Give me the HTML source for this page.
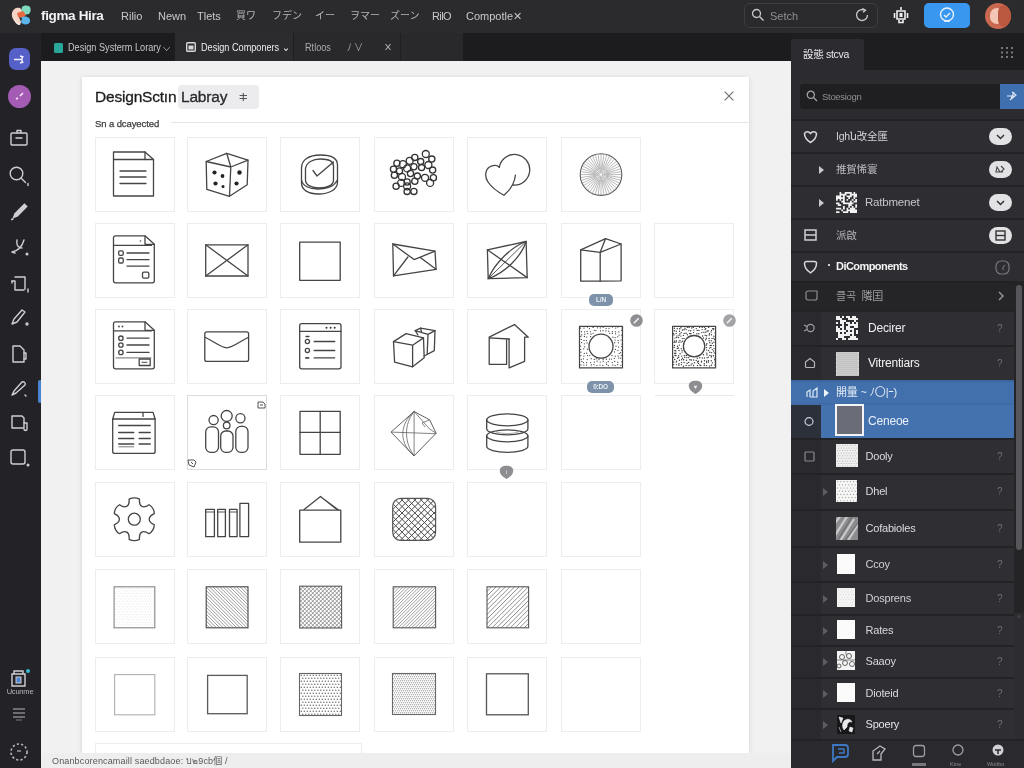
<!DOCTYPE html>
<html lang="en">
<head>
<meta charset="utf-8">
<title>Design System Library</title>
<style>
*{box-sizing:border-box;margin:0;padding:0}
html,body{width:1024px;height:768px;overflow:hidden;background:#f0f0f1;}
body{filter:blur(0.55px);font-family:"Liberation Sans","Noto Sans CJK JP",sans-serif;}
.abs{position:absolute}
#top{position:absolute;left:0;top:0;width:1024px;height:33px;background:#2b2b2e;color:#d4d4d8;}
#top span.m{position:absolute;top:9px;font-size:11px;line-height:14px;color:#c9c9cd;white-space:nowrap}
#top span.j{font-size:10px;color:#b4b4b9}
#tabs{position:absolute;left:0;top:33px;width:791px;height:28px;background:#1c1c1f}
#tabs .t{position:absolute;top:0;height:28px;font-size:10.500px;line-height:28px;color:#c8c8cc;white-space:nowrap;transform:scaleX(.87);transform-origin:0 50%}
#side{position:absolute;left:0;top:33px;width:41px;height:735px;background:#232327}
#canvas{position:absolute;left:41px;top:61px;width:750px;height:707px;background:#f1f1f2}
#modal{position:absolute;left:82px;top:77px;width:667px;height:676px;background:#fff;box-shadow:0 1px 5px rgba(0,0,0,.13);overflow:hidden}
.card{position:absolute;width:80px;height:75px;border:1px solid #ededf0;background:#fff}
.card svg{position:absolute;left:-1px;top:-1px}
.card.sel{border-color:#dcdce0}
.bdg{position:absolute;border-radius:5px;background:#7e93aa;color:#e8eef4;font-size:6.500px;line-height:12px;text-align:center;font-weight:bold;letter-spacing:-0.2px}
#rp{position:absolute;left:791px;top:33px;width:233px;height:735px;background:#2c2c30;color:#d8d8dc;font-size:12px;overflow:hidden}
.row{position:absolute;left:0;width:223px;background:#2e2e32;border-top:2px solid #232326}
.row .tx{position:absolute;white-space:nowrap;color:#d6d6da;font-size:12px;line-height:14px}
.pill{position:absolute;left:198px;width:23px;height:17px;border-radius:9px;background:#e2e2e5}
.th{position:absolute;background:#f4f4f4}
.q{position:absolute;left:206px;font-size:10px;color:#6d6d73;line-height:12px}
.ar{position:absolute;left:31px;width:0;height:0;border-left:5px solid #66666b;border-top:4px solid transparent;border-bottom:4px solid transparent}
.lc{position:absolute;left:0;top:0;width:30px;height:100%;background:#2a2a2e}
</style>
</head>
<body>
<div id="top">
<svg class="abs" style="left:10px;top:4px" width="24" height="24" viewBox="0 0 24 24"><path d="M2 9c1-4 4-6 8-5l3 3-2 5 1 4-2 5-3-1C4 17 1 13 2 9z" fill="#f6d3c6"/><path d="M12 3c2-2 6-2 8 0 1 2 1 5-1 7l-5 1-3-3z" fill="#7fd9be"/><path d="M7 9l6-2 3 4-3 3-5-1z" fill="#e8683f"/><path d="M11 14c2-2 6-2 8 0 2 2 1 5-1 6-3 1-6 0-7-2z" fill="#5bb4ea"/><path d="M9 13l3 1-1 4z" fill="#2b2b2e"/><path d="M4 13c1 3 3 6 6 7l-1 1c-3-1-5-4-5-8z" fill="#fbeee8"/></svg>
<span class="m" style="left:41px;top:7px;font-size:13.500px;line-height:18px;color:#f3f3f5;font-weight:bold;letter-spacing:-0.35px">figma Hira</span>
<span class="m" style="left:121px">Rilio</span>
<span class="m" style="left:158px">Newn</span>
<span class="m" style="left:197px">Tlets</span>
<span class="m j" style="left:236px">買ワ</span>
<span class="m j" style="left:272px">フデン</span>
<span class="m j" style="left:315px">イー</span>
<span class="m j" style="left:350px">ヲマー</span>
<span class="m j" style="left:390px">ズーン</span>
<span class="m" style="left:432px;letter-spacing:-0.6px">RilO</span>
<span class="m" style="left:466px">Compotle✕</span>
<div class="abs" style="left:744px;top:3px;width:134px;height:25px;border:1px solid #3d3d41;border-radius:6px;background:#2a2a2d"></div>
<svg class="abs" style="left:751px;top:8px" width="14" height="14" viewBox="0 0 14 14"><circle cx="5.500" cy="5.500" r="4" fill="none" stroke="#c8c8cc" stroke-width="1.3"/><path d="M8.500 8.500l4 4" stroke="#c8c8cc" stroke-width="1.4"/></svg>
<span class="m" style="left:770px;color:#8f8f95">Setch</span>
<svg class="abs" style="left:854px;top:7px" width="16" height="16" viewBox="0 0 16 16"><path d="M13.500 8a5.500 5.500 0 1 1-2.500-4.600" fill="none" stroke="#c8c8cc" stroke-width="1.3"/><path d="M8.500 1.500l3 1.800-2.500 2" fill="none" stroke="#c8c8cc" stroke-width="1.3"/></svg>
<svg class="abs" style="left:893px;top:6px" width="16" height="18" viewBox="0 0 16 18"><path d="M8 1v3M4 5h8v8H4zM1.500 7v5M14.500 7v5M6 14v2.500h4V14" fill="none" stroke="#f0f0f2" stroke-width="1.600"/><rect x="6.500" y="7" width="3" height="4" fill="#f0f0f2"/></svg>
<div class="abs" style="left:924px;top:3px;width:46px;height:25px;border-radius:5px;background:#3a97ef"></div>
<svg class="abs" style="left:938px;top:6px" width="18" height="18" viewBox="0 0 18 18"><circle cx="9" cy="8.500" r="6.500" fill="none" stroke="#e9f3ff" stroke-width="1.400"/><path d="M6 9l2 2 4-4M6 15h6" fill="none" stroke="#e9f3ff" stroke-width="1.300"/></svg>
<div class="abs" style="left:985px;top:3px;width:26px;height:26px;border-radius:13px;background:#c9694f;overflow:hidden"><div class="abs" style="left:5px;top:5px;width:14px;height:16px;border-radius:8px;background:#f3c6b5"></div><div class="abs" style="left:13px;top:2px;width:14px;height:22px;border-radius:8px;background:#b9573f"></div></div>
</div>

<div id="tabs">
<div class="abs" style="left:175px;top:0;width:118px;height:28px;background:#2c2c2f"></div>
<div class="abs" style="left:293px;top:0;width:170px;height:28px;background:#29292c;border-left:1px solid #1d1d20"></div>
<div class="abs" style="left:400px;top:0;width:1px;height:28px;background:#1f1f22"></div>
<div class="abs" style="left:54px;top:10px;width:9px;height:10px;border-radius:1.500px;background:#2aa79c"></div>
<div class="t" style="left:68px">Design Systerm Lorary ⌵</div>
<svg class="abs" style="left:186px;top:9px" width="10" height="10" viewBox="0 0 10 10"><rect x=".7" y=".7" width="8.600" height="8.600" rx="1" fill="none" stroke="#d8d8dc" stroke-width="1.400"/><rect x="2.500" y="3.500" width="5" height="4" fill="#d8d8dc"/></svg>
<div class="t" style="left:201px;color:#ececf0">Design Componers ⌄</div>
<div class="t" style="left:305px;color:#a9a9ae">Rtloos</div>
<div class="t" style="left:347px;color:#a9a9ae">ﾉ ∨</div>
<div class="t" style="left:384px;color:#a9a9ae">✕</div>
</div>

<div id="side">
<div class="abs" style="left:9px;top:15px;width:21px;height:22px;border-radius:7px;background:#5560c8"></div>
<svg class="abs" style="left:13px;top:21px" width="13" height="11" viewBox="0 0 13 11"><path d="M1 5.500h8M7 2l3.500 1M7 9l3.500-1M9 2v7" fill="none" stroke="#f0f0ff" stroke-width="1.400"/></svg>
<div class="abs" style="left:8px;top:52px;width:23px;height:23px;border-radius:12px;background:#a45bb4"></div>
<svg class="abs" style="left:14px;top:58px" width="11" height="11" viewBox="0 0 11 11"><path d="M2 8l2-1M6 5l3-3" stroke="#f6e8fa" stroke-width="1.600" fill="none"/></svg>
<svg class="abs" style="left:9.0px;top:95.0px" width="20" height="20" viewBox="0 0 20 20"><g fill="none" stroke="#cfcfd3" stroke-width="1.400" stroke-linecap="round" stroke-linejoin="round"><rect x="2" y="5" width="16" height="12" rx="1"/><path d="M8 5V2.500h4V5M7 10h6"/></g></svg>
<svg class="abs" style="left:9.0px;top:132.0px" width="22" height="22" viewBox="0 0 22 22"><g fill="none" stroke="#cfcfd3" stroke-width="1.400" stroke-linecap="round" stroke-linejoin="round"><circle cx="7.500" cy="8.500" r="6.300"/><path d="M12 13l4.500 4.500M19 18.500v2"/></g></svg>
<svg class="abs" style="left:9px;top:167px" width="22" height="22" viewBox="0 0 20 20"><path d="M3 17l2-5 9-9 3 3-9 9z" fill="#cfcfd3"/><path d="M2 18l2-1" stroke="#cfcfd3" stroke-width="1.400"/></svg>
<svg class="abs" style="left:9.0px;top:203.0px" width="22" height="22" viewBox="0 0 22 22"><g fill="none" stroke="#cfcfd3" stroke-width="1.400" stroke-linecap="round" stroke-linejoin="round"><path d="M3 16c5-1 10-5 12-12M8 4c-1 5 1 8 5 8M3 16l3 1"/><circle cx="18" cy="18" r="0.800"/></g></svg>
<svg class="abs" style="left:9.0px;top:241.0px" width="22" height="22" viewBox="0 0 22 22"><g fill="none" stroke="#cfcfd3" stroke-width="1.400" stroke-linecap="round" stroke-linejoin="round"><path d="M6 3h10v12M3 7h3v9h9"/><path d="M3 7v4M6 3v0" stroke-dasharray="2 2"/><path d="M19 15v3"/></g></svg>
<svg class="abs" style="left:9.0px;top:274.0px" width="22" height="22" viewBox="0 0 22 22"><g fill="none" stroke="#cfcfd3" stroke-width="1.400" stroke-linecap="round" stroke-linejoin="round"><path d="M3 17l2-5 8-9 3 2-8 10z"/><circle cx="18" cy="17" r="1" /></g></svg>
<svg class="abs" style="left:9.0px;top:311.0px" width="20" height="20" viewBox="0 0 20 20"><g fill="none" stroke="#cfcfd3" stroke-width="1.400" stroke-linecap="round" stroke-linejoin="round"><path d="M4 2h7l4 4v12H4z"/><path d="M15 9h2v6h-2"/></g></svg>
<svg class="abs" style="left:9.0px;top:345.0px" width="22" height="22" viewBox="0 0 22 22"><g fill="none" stroke="#cfcfd3" stroke-width="1.400" stroke-linecap="round" stroke-linejoin="round"><path d="M3 17l2-4 8-9c2-1 4 1 3 3l-9 8z"/><path d="M16 17l1 1"/></g></svg>
<svg class="abs" style="left:9.0px;top:380.0px" width="22" height="22" viewBox="0 0 22 22"><g fill="none" stroke="#cfcfd3" stroke-width="1.400" stroke-linecap="round" stroke-linejoin="round"><path d="M3 3h10l2 2v10H3z"/><path d="M15 10h3v6c0 2-3 2-3 0"/></g></svg>
<svg class="abs" style="left:9.0px;top:415.0px" width="22" height="22" viewBox="0 0 22 22"><g fill="none" stroke="#cfcfd3" stroke-width="1.400" stroke-linecap="round" stroke-linejoin="round"><rect x="2" y="2" width="14" height="14" rx="2"/><circle cx="19" cy="17" r="0.800"/></g></svg>
<div class="abs" style="left:38px;top:347px;width:4px;height:23px;border-radius:2px;background:#4a83cf"></div>
<svg class="abs" style="left:9px;top:635px" width="22" height="20" viewBox="0 0 22 20"><path d="M3 6h13v12H3zM5 6V3h9v3" fill="none" stroke="#d0d0d4" stroke-width="1.400"/><rect x="7" y="9" width="5" height="6" fill="#4a83cf" stroke="#d0d0d4"/><circle cx="19" cy="3" r="2" fill="#35b8d0"/></svg>
<div class="abs" style="left:3px;top:654px;width:34px;text-align:center;font-size:7.500px;line-height:10px;color:#b4b4b9;letter-spacing:-0.2px">Ucunme</div>
<svg class="abs" style="left:12px;top:674px" width="14" height="14" viewBox="0 0 14 14"><path d="M1 2h12M1 6h12M1 10h12" stroke="#b8b8bd" stroke-width="1.200"/><path d="M4 13h6" stroke="#77777c" stroke-width="1"/></svg>
<svg class="abs" style="left:9px;top:709px" width="20" height="20" viewBox="0 0 20 20"><circle cx="10" cy="10" r="8" fill="none" stroke="#b8b8bd" stroke-width="1.600" stroke-dasharray="2.200 2.200"/><path d="M8 9h4" stroke="#b8b8bd" stroke-width="1.200"/></svg>
</div>

<div id="canvas"></div>
<div id="modal"></div>
<div id="grid" class="abs" style="left:0;top:0;width:749px;height:753px;overflow:hidden">
<div class="card" style="left:95px;top:137px"><svg width="81" height="75" viewBox="0 0 81 75"><g fill="none" stroke="#454547" stroke-width="1.300" stroke-linejoin="round" stroke-linecap="round" ><path d="M18.500 15h31.500l8.500 7.500v36.500h-40z"/><path d="M50 15v7.500h8.500"/><path d="M18.500 22.500h31.500"/><path d="M25 34h26M25 40h26M25 46.500h26"/></g></svg></div>
<div class="card" style="left:187px;top:137px"><svg width="81" height="75" viewBox="0 0 81 75"><g fill="none" stroke="#454547" stroke-width="1.300" stroke-linejoin="round" stroke-linecap="round" ><path d="M39.700 16.300L61 23.200 60.200 47.800 42.500 59.300 19.800 52.400 19.200 24.500z"/><path d="M19.200 24.500L43.800 30 61 23.200M43.800 30L42.500 59.300M39.700 16.300L43.800 30"/></g><g fill="#222"><circle cx="27.500" cy="35.500" r="2.100"/><circle cx="35.500" cy="39" r="1.900"/><circle cx="28.500" cy="46.500" r="2.100"/><circle cx="36" cy="49.500" r="1.500"/><circle cx="52.500" cy="35.500" r="2.200"/><circle cx="49.500" cy="46.500" r="2.100"/></g></svg></div>
<div class="card" style="left:280px;top:137px"><svg width="81" height="75" viewBox="0 0 81 75"><g fill="none" stroke="#454547" stroke-width="1.300" stroke-linejoin="round" stroke-linecap="round" ><path d="M21.500 31c0-8 7-13 19-13 10 0 17 3 17 10v17c0 8-9 12-19 12s-17-4-17-11z"/><path d="M25.500 31.500c1-6 7-9.500 15-9.500 8 0 13 2 13 7v14c0 5-6 8-14 8s-14-3-14-8z"/><path d="M21.500 43c1 6 8 9 16 9 9 0 17-3 20-9"/><path d="M33 33.500l4 5.500 16.500-14"/></g></svg></div>
<div class="card" style="left:374px;top:137px"><svg width="81" height="75" viewBox="0 0 81 75"><g fill="none" stroke="#333" stroke-width="1.300" ><circle cx="51.8" cy="17" r="3.5"/><circle cx="57.8" cy="22.1" r="3.1"/><circle cx="46.7" cy="24.6" r="3.1"/><circle cx="35.7" cy="23.8" r="3.5"/><circle cx="40.8" cy="20.4" r="3.1"/><circle cx="22.9" cy="26.3" r="3.1"/><circle cx="28.9" cy="27.2" r="3.5"/><circle cx="19.5" cy="32.3" r="3.1"/><circle cx="25.5" cy="34" r="3.1"/><circle cx="33.1" cy="31.4" r="3.5"/><circle cx="39.9" cy="29.7" r="3.1"/><circle cx="47.6" cy="30.6" r="3.1"/><circle cx="54.4" cy="28" r="3.5"/><circle cx="58.6" cy="33.1" r="3.1"/><circle cx="20.4" cy="38.2" r="3.1"/><circle cx="28" cy="39.9" r="3.5"/><circle cx="36.5" cy="36.5" r="3.1"/><circle cx="43.3" cy="39.1" r="3.1"/><circle cx="51" cy="40.8" r="3.5"/><circle cx="59.4" cy="40.8" r="3.1"/><circle cx="22.1" cy="49.3" r="3.1"/><circle cx="27.2" cy="45.9" r="3.5"/><circle cx="33.1" cy="45" r="3.1"/><circle cx="40.8" cy="44.2" r="3.1"/><circle cx="56.1" cy="45.9" r="3.5"/><circle cx="33.1" cy="54.4" r="3.1"/><circle cx="39.9" cy="54.4" r="3.1"/><circle cx="33.1" cy="49.3" r="3.5"/></g></svg></div>
<div class="card" style="left:467px;top:137px"><svg width="81" height="75" viewBox="0 0 81 75"><g fill="none" stroke="#454547" stroke-width="1.300" stroke-linejoin="round" stroke-linecap="round" ><path d="M32.3 30.4A15.3 15.3 0 1 1 46.0 48.0"/><path d="M32.3 30.4C31 28 26 27.500 22.500 30C18 33 17.500 40 21 45C25 51 31 55 37 58.300C42 54 47.500 47 48.400 38.200"/></g></svg></div>
<div class="card" style="left:561px;top:137px"><svg width="81" height="75" viewBox="0 0 81 75"><g fill="none" stroke="#5a5a5a" ><circle cx="40" cy="37.6" r="20.8" stroke-width="1.100"/><path d="M41.2 37.6L60.8 37.6M45.4 38.4L60.6 40.6M42.9 38.4L60.0 43.5M45.0 39.9L58.9 46.2M41.0 38.2L57.5 48.8M44.2 41.2L55.7 51.2M42.0 39.9L53.6 53.3M43.0 42.2L51.2 55.1M40.5 38.7L48.6 56.5M41.5 42.9L45.9 57.6M40.4 40.6L43.0 58.2M40.0 43.1L40.0 58.4M39.8 38.8L37.0 58.2M38.5 42.9L34.1 57.6M38.8 40.3L31.4 56.5M37.0 42.2L28.8 55.1M39.2 38.5L26.4 53.3M35.8 41.2L24.3 51.2M37.5 39.2L22.5 48.8M35.0 39.9L21.1 46.2M38.8 37.9L20.0 43.5M34.6 38.4L19.4 40.6M37.0 37.6L19.2 37.6M34.6 36.8L19.4 34.6M38.8 37.3L20.0 31.7M35.0 35.3L21.1 29.0M37.5 36.0L22.5 26.4M35.8 34.0L24.3 24.0M39.2 36.7L26.4 21.9M37.0 33.0L28.8 20.1M38.8 34.9L31.4 18.7M38.5 32.3L34.1 17.6M39.8 36.4L37.0 17.0M40.0 32.1L40.0 16.8M40.4 34.6L43.0 17.0M41.5 32.3L45.9 17.6M40.5 36.5L48.6 18.7M43.0 33.0L51.2 20.1M42.0 35.3L53.6 21.9M44.2 34.0L55.7 24.0M41.0 37.0L57.5 26.4M45.0 35.3L58.9 29.0M42.9 36.8L60.0 31.7M45.4 36.8L60.6 34.6" stroke-width="0.550" stroke="#808080"/></g></svg></div>
<div class="card" style="left:95px;top:223px"><svg width="81" height="75" viewBox="0 0 81 75"><g fill="none" stroke="#454547" stroke-width="1.300" stroke-linejoin="round" stroke-linecap="round" ><path d="M20.500 12.800h29.500l9.300 8.500v36.500a2 2 0 0 1-2 2H20.500a2 2 0 0 1-2-2V14.800a2 2 0 0 1 2-2z"/><path d="M50 12.800v8.500h9.300"/><path d="M18.500 22.300h38"/><path d="M32 30h22M32 36.600h22M32 43.100h22"/><rect x="23.700" y="27.800" width="4.500" height="4.500" rx="1.200"/><rect x="23.700" y="35" width="4.500" height="5" rx="1.200"/><rect x="47.500" y="49.100" width="6.300" height="6.100" rx="1.400"/></g><circle cx="45.500" cy="18" r="0.800" fill="#444"/></svg></div>
<div class="card" style="left:187px;top:223px"><svg width="81" height="75" viewBox="0 0 81 75"><g fill="none" stroke="#454547" stroke-width="1.300" stroke-linejoin="round" stroke-linecap="round" ><rect x="18.700" y="21.800" width="42.300" height="31.200"/><path d="M18.700 21.800L61 53M61 21.800L18.700 53"/></g></svg></div>
<div class="card" style="left:280px;top:223px"><svg width="81" height="75" viewBox="0 0 81 75"><g fill="none" stroke="#454547" stroke-width="1.300" stroke-linejoin="round" stroke-linecap="round" ><rect x="19.700" y="19.100" width="40.500" height="38.200"/></g></svg></div>
<div class="card" style="left:374px;top:223px"><svg width="81" height="75" viewBox="0 0 81 75"><g fill="none" stroke="#454547" stroke-width="1.300" stroke-linejoin="round" stroke-linecap="round" ><path d="M18.800 21L61 28.200 62.100 46.300 19.500 52.800z"/><path d="M18.800 21L40.100 36.600 61 28.200M19.500 52.800L33.900 34M62.100 46.300L46.600 34.700"/></g></svg></div>
<div class="card" style="left:467px;top:223px"><svg width="81" height="75" viewBox="0 0 81 75"><g fill="none" stroke="#454547" stroke-width="1.300" stroke-linejoin="round" stroke-linecap="round" ><path d="M20.400 26.800L59.100 18.500 60.200 54.600 21.200 55.700z"/><path d="M20.400 26.800L60.200 54.600"/><path d="M21.200 55.700C28 40 44 24 59.100 18.500 54 34 38 50 21.200 55.700z"/><path d="M21.200 55.700L59.100 18.500" stroke-width="0.900"/></g></svg></div>
<div class="card" style="left:561px;top:223px"><svg width="81" height="75" viewBox="0 0 81 75"><g fill="none" stroke="#454547" stroke-width="1.300" stroke-linejoin="round" stroke-linecap="round" ><path d="M19.700 26.800v31.400h19.500l20.900-.4V21L44.600 15.600z"/><path d="M19.700 26.800L39.200 29.300 60.100 21M39.200 29.300v28.900M39.200 29.300L44.600 15.600"/></g></svg></div>
<div class="card" style="left:654px;top:223px"><svg width="81" height="75" viewBox="0 0 81 75"></svg></div>
<div class="card" style="left:95px;top:309px"><svg width="81" height="75" viewBox="0 0 81 75"><g fill="none" stroke="#454547" stroke-width="1.300" stroke-linejoin="round" stroke-linecap="round" ><path d="M20.500 12.800h29.500l9.300 8.500v36.500a2 2 0 0 1-2 2H20.500a2 2 0 0 1-2-2V14.800a2 2 0 0 1 2-2z"/><path d="M50 12.800v8.500h9.300"/><path d="M18.500 21.800h38"/><path d="M32 29.200h22M32 36h22M32 43.400h22"/><circle cx="25.900" cy="29.200" r="2.200"/><circle cx="25.900" cy="36" r="2.200"/><circle cx="25.900" cy="43.400" r="2.200"/><path d="M21 48.900h35" stroke-width="0.800"/><rect x="44.200" y="50" width="11" height="6.500"/><path d="M47 53.300h5" stroke-width="1"/></g><g fill="#444"><circle cx="24" cy="17.500" r="0.900"/><circle cx="27.500" cy="17.500" r="0.900"/></g></svg></div>
<div class="card" style="left:187px;top:309px"><svg width="81" height="75" viewBox="0 0 81 75"><g fill="none" stroke="#454547" stroke-width="1.300" stroke-linejoin="round" stroke-linecap="round" ><rect x="17.800" y="22.900" width="43.800" height="29.500" rx="2"/><path d="M18.500 28.500C28 33 34 38.800 39.700 38.800S52 33 61 28.500"/></g></svg></div>
<div class="card" style="left:280px;top:309px"><svg width="81" height="75" viewBox="0 0 81 75"><g fill="none" stroke="#454547" stroke-width="1.300" stroke-linejoin="round" stroke-linecap="round" ><rect x="19.700" y="14.700" width="41.300" height="45.100" rx="2"/><path d="M19.700 22.300h41.300"/><path d="M34.200 32.500h20.500M34.200 41.500h20.500M34.200 48.900h20.500"/><circle cx="27.400" cy="32.500" r="2.100"/><circle cx="27.400" cy="41.500" r="2.100"/><path d="M26 48.900h2.500" stroke-width="1.800"/><path d="M26 27.500h3" /></g><g fill="#333"><circle cx="46.500" cy="18.700" r="1"/><circle cx="50.600" cy="18.700" r="1"/><circle cx="54.700" cy="18.700" r="1"/></g></svg></div>
<div class="card" style="left:374px;top:309px"><svg width="81" height="75" viewBox="0 0 81 75"><g fill="none" stroke="#454547" stroke-width="1.300" stroke-linejoin="round" stroke-linecap="round" ><path d="M19.500 32.600L32.100 24.600 49.500 28.900 50.200 48.800 38.600 57.800 20.600 53.100z"/><path d="M19.500 32.600L38.600 36.200 49.500 28.900M38.600 36.200V57.800"/><path d="M41.200 21.700L46.600 19.200 61 21.700 60.300 41.600 50.200 47"/><path d="M41.200 21.700L54 25.300 61 21.700M54 25.300L53.200 45M44 26l-2.800-4.300M46.600 19.200l1 4"/></g></svg></div>
<div class="card" style="left:467px;top:309px"><svg width="81" height="75" viewBox="0 0 81 75"><g fill="none" stroke="#454547" stroke-width="1.300" stroke-linejoin="round" stroke-linecap="round" ><path d="M22.200 28.200L47.500 15.600 61.300 28.200H57.600V52.400L42.100 58.900V30"/><path d="M22.200 28.900V55.300H39.600V30.500M22.200 28.900L42.100 30M39.600 30.500V55.300"/></g></svg></div>
<div class="card" style="left:561px;top:309px"><svg width="81" height="75" viewBox="0 0 81 75"><path d="M19.6 19.0h.01M23.0 19.1h.01M26.5 18.1h.01M28.5 19.5h.01M32.1 18.4h.01M36.5 18.8h.01M39.3 18.9h.01M42.1 18.3h.01M45.1 19.6h.01M48.0 19.3h.01M51.4 18.1h.01M54.7 19.1h.01M56.9 18.1h.01M61.1 18.9h.01M20.5 22.7h.01M23.6 22.8h.01M26.1 22.5h.01M29.3 22.8h.01M33.2 21.3h.01M34.9 21.5h.01M39.5 21.9h.01M42.0 21.6h.01M44.9 21.8h.01M47.7 22.2h.01M51.3 22.7h.01M54.5 22.8h.01M57.9 22.9h.01M60.7 21.4h.01M20.7 25.9h.01M23.9 25.2h.01M26.7 24.6h.01M30.0 25.2h.01M32.1 24.3h.01M48.7 24.3h.01M51.3 24.3h.01M54.6 24.8h.01M58.0 26.0h.01M60.4 26.0h.01M19.8 27.4h.01M23.4 27.4h.01M25.8 28.0h.01M29.6 27.6h.01M51.9 28.2h.01M54.1 28.6h.01M56.8 27.8h.01M61.3 28.2h.01M20.2 30.4h.01M23.0 31.4h.01M25.4 31.5h.01M54.0 31.0h.01M57.1 31.5h.01M60.0 31.1h.01M20.6 33.5h.01M23.3 34.8h.01M26.0 33.9h.01M53.7 33.7h.01M57.4 33.8h.01M61.0 35.0h.01M19.5 37.1h.01M23.8 37.8h.01M55.0 37.0h.01M57.7 38.1h.01M60.7 37.5h.01M19.7 40.3h.01M22.7 39.8h.01M26.5 40.2h.01M54.4 40.3h.01M56.9 41.3h.01M60.4 41.1h.01M19.8 43.2h.01M23.3 44.3h.01M25.7 44.2h.01M53.5 42.9h.01M58.2 44.3h.01M59.7 43.7h.01M19.8 46.5h.01M22.9 47.1h.01M26.5 46.5h.01M28.8 46.5h.01M51.0 46.6h.01M54.2 47.2h.01M57.2 47.1h.01M60.3 46.3h.01M20.2 50.3h.01M22.4 49.8h.01M26.2 50.6h.01M30.2 49.7h.01M33.2 50.4h.01M35.2 49.8h.01M38.0 50.5h.01M42.1 50.6h.01M45.4 50.2h.01M48.4 50.0h.01M50.4 50.1h.01M53.3 49.3h.01M57.8 49.1h.01M59.7 49.2h.01M20.8 52.4h.01M22.3 53.6h.01M25.6 53.6h.01M29.7 53.6h.01M33.3 53.1h.01M36.1 52.2h.01M39.2 53.0h.01M42.2 52.3h.01M45.3 53.8h.01M47.2 52.7h.01M51.2 53.6h.01M53.7 52.4h.01M56.8 53.2h.01M60.9 52.8h.01M19.9 55.9h.01M22.9 56.0h.01M25.5 56.1h.01M30.3 55.9h.01M32.9 55.5h.01M35.9 56.6h.01M39.0 56.1h.01M41.8 56.4h.01M45.6 55.5h.01M47.3 56.5h.01M51.8 56.1h.01M54.1 56.5h.01M56.7 55.7h.01M59.9 56.3h.01" fill="none" stroke="#3a3a3c" stroke-width="1.25" stroke-linecap="round"/><g fill="none" stroke="#454547" stroke-width="1.300" stroke-linejoin="round" stroke-linecap="round" ><rect x="18.5" y="17.3" width="43.0" height="41.6" stroke-width="1.200"/><circle cx="40.0" cy="37.2" r="12" fill="#fff"/></g></svg></div>
<div class="card" style="left:654px;top:309px"><svg width="81" height="75" viewBox="0 0 81 75"><path d="M20.4 19.3h.01M23.2 19.7h.01M25.6 19.7h.01M26.9 18.8h.01M31.0 19.2h.01M33.4 18.2h.01M35.1 18.4h.01M37.8 19.0h.01M39.3 18.4h.01M42.3 19.6h.01M45.7 18.3h.01M48.2 18.2h.01M50.4 18.2h.01M51.8 19.6h.01M54.7 18.4h.01M58.6 19.6h.01M59.8 19.7h.01M20.3 21.7h.01M22.2 22.2h.01M25.5 22.2h.01M28.4 21.0h.01M30.0 20.8h.01M32.1 20.6h.01M34.8 21.6h.01M36.8 21.7h.01M39.9 21.1h.01M43.3 21.4h.01M44.9 21.4h.01M48.1 20.6h.01M51.1 20.5h.01M53.1 22.0h.01M54.3 21.9h.01M57.5 21.5h.01M59.3 20.6h.01M19.6 24.7h.01M22.2 24.4h.01M26.0 24.7h.01M27.4 23.6h.01M30.2 24.4h.01M32.0 24.3h.01M35.7 24.5h.01M36.9 24.7h.01M39.5 23.6h.01M42.9 24.7h.01M44.9 24.7h.01M47.8 23.6h.01M49.9 23.3h.01M51.9 23.3h.01M55.5 24.8h.01M57.1 23.1h.01M61.1 24.0h.01M20.0 25.9h.01M22.9 27.0h.01M25.1 26.3h.01M26.9 27.1h.01M29.4 26.4h.01M33.3 25.7h.01M48.6 27.0h.01M51.1 26.3h.01M52.7 26.8h.01M55.2 26.0h.01M57.5 25.8h.01M60.0 27.3h.01M21.0 29.1h.01M22.7 28.6h.01M24.5 28.5h.01M28.2 29.6h.01M30.0 29.4h.01M49.3 29.0h.01M52.3 29.2h.01M55.1 29.5h.01M58.0 29.4h.01M59.9 29.2h.01M20.6 32.0h.01M22.4 32.0h.01M25.9 31.7h.01M28.6 32.2h.01M51.8 30.8h.01M55.1 31.7h.01M57.2 31.7h.01M60.4 30.6h.01M20.1 33.4h.01M21.9 33.2h.01M24.9 33.3h.01M27.1 33.1h.01M52.8 34.7h.01M55.8 33.8h.01M58.3 34.2h.01M60.0 33.3h.01M20.4 36.5h.01M23.5 37.2h.01M25.4 36.1h.01M52.5 36.1h.01M56.1 36.4h.01M57.3 36.4h.01M59.5 36.6h.01M20.1 38.5h.01M23.2 39.5h.01M24.3 39.0h.01M27.3 39.7h.01M52.6 38.6h.01M55.6 39.1h.01M56.9 38.5h.01M60.1 39.6h.01M20.9 41.5h.01M21.8 41.9h.01M25.1 41.5h.01M28.1 41.6h.01M52.7 41.1h.01M54.6 41.6h.01M58.3 40.6h.01M59.7 42.0h.01M20.7 44.2h.01M21.8 44.3h.01M26.1 44.8h.01M28.1 43.1h.01M52.8 44.3h.01M55.9 43.2h.01M57.6 43.6h.01M60.4 43.9h.01M21.0 46.2h.01M21.9 46.8h.01M24.6 46.6h.01M27.7 47.1h.01M30.3 46.6h.01M32.3 46.5h.01M49.5 45.7h.01M52.9 45.9h.01M55.9 46.4h.01M57.4 46.9h.01M59.4 46.8h.01M19.4 48.3h.01M23.5 49.2h.01M24.7 48.2h.01M28.6 49.2h.01M30.8 48.3h.01M32.9 48.6h.01M34.7 48.6h.01M43.3 49.2h.01M45.7 48.8h.01M48.3 48.9h.01M50.4 49.0h.01M53.1 48.7h.01M54.5 48.1h.01M57.2 48.1h.01M60.9 48.9h.01M20.7 50.5h.01M22.6 52.1h.01M25.4 51.3h.01M27.6 50.7h.01M29.6 50.8h.01M32.5 51.2h.01M35.9 50.8h.01M37.3 51.0h.01M39.6 51.0h.01M42.2 51.4h.01M44.4 52.2h.01M47.5 52.2h.01M50.5 51.7h.01M52.6 52.2h.01M54.5 51.7h.01M57.3 51.7h.01M60.6 50.8h.01M19.7 53.0h.01M22.2 53.1h.01M25.0 54.8h.01M27.5 53.6h.01M30.1 53.5h.01M33.1 54.3h.01M34.6 53.4h.01M38.0 54.7h.01M40.5 53.8h.01M43.6 53.0h.01M44.4 54.4h.01M47.5 53.1h.01M50.3 54.8h.01M52.7 53.6h.01M54.5 53.1h.01M58.4 53.9h.01M61.0 53.1h.01M19.7 55.6h.01M22.5 55.6h.01M24.8 56.2h.01M27.4 55.6h.01M29.4 57.2h.01M32.1 56.4h.01M35.0 56.5h.01M37.0 56.1h.01M39.5 56.5h.01M43.5 56.6h.01M45.8 55.9h.01M46.8 56.5h.01M50.2 56.5h.01M52.5 56.6h.01M55.6 57.1h.01M57.4 56.3h.01M60.8 55.9h.01" fill="none" stroke="#3a3a3c" stroke-width="1.4" stroke-linecap="round"/><g fill="none" stroke="#454547" stroke-width="1.300" stroke-linejoin="round" stroke-linecap="round" ><rect x="18.6" y="17.3" width="43.0" height="41.6" stroke-width="1.200"/><circle cx="40.1" cy="37.2" r="10.7" fill="#fff"/></g></svg></div>
<div class="card" style="left:95px;top:395px"><svg width="81" height="75" viewBox="0 -1 81 75"><g fill="none" stroke="#454547" stroke-width="1.300" stroke-linejoin="round" stroke-linecap="round" ><path d="M17.700 23l2-6.600h38.400l2 6.600z"/><path d="M17.700 23v32.400a2 2 0 0 0 2 2h38.400a2 2 0 0 0 2-2V23"/><path d="M23.700 29.500h31.500" /><path d="M23.700 36.400h15M23.700 42.400h15M23.700 48.100h15M44.200 36.400h11M44.200 42.400h11M44.200 48.100h11" stroke-width="1.500"/><path d="M48 16.400v4"/><path d="M23.700 50.800h15" stroke-width="0.700"/></g></svg></div>
<div class="card sel" style="left:187px;top:395px"><svg width="81" height="75" viewBox="0 -1 81 75"><g fill="none" stroke="#454547" stroke-width="1.300" stroke-linejoin="round" stroke-linecap="round" ><circle cx="39.700" cy="20" r="5.500"/><circle cx="26.600" cy="24.100" r="4.600"/><circle cx="53.400" cy="22.200" r="4.600"/><circle cx="39.700" cy="29.500" r="3.300"/><rect x="33.700" y="35" width="12.300" height="21.300" rx="5"/><rect x="18.700" y="30.900" width="12.800" height="25.400" rx="5"/><rect x="48.800" y="30.400" width="12.200" height="25.900" rx="5"/></g></svg></div>
<div class="card" style="left:280px;top:395px"><svg width="81" height="75" viewBox="0 -1 81 75"><g fill="none" stroke="#454547" stroke-width="1.300" stroke-linejoin="round" stroke-linecap="round" ><rect x="20" y="15.300" width="40.200" height="43"/><path d="M40.200 15.300v43M20 36.400h40.200"/></g></svg></div>
<div class="card" style="left:374px;top:395px"><svg width="81" height="75" viewBox="0 -1 81 75"><g fill="none" stroke="#5a5a5c" stroke-linejoin="round" ><path d="M17 36.100L40.100 15.500 55.600 23.800 62.100 37.200 40.100 59.900z" stroke-width="0.950"/><path d="M17 36.100L62.100 37.700M40.100 15.500L40.100 59.900M40.100 15.500C30 28 30 46 40.100 59.900M40.100 15.500C24 30 26 48 40.100 59.900M40.100 15.500L55.600 33 62.100 37.200M55.600 23.800L48 27l3 4" stroke-width="0.750"/></g></svg></div>
<div class="card" style="left:467px;top:395px"><svg width="81" height="75" viewBox="0 -1 81 75"><g fill="none" stroke="#454547" stroke-width="1.300" stroke-linejoin="round" stroke-linecap="round" stroke-width="1.400" ><ellipse cx="40.300" cy="23.800" rx="20.600" ry="6"/><path d="M19.700 23.800v9c0 3.300 9 6 20.600 6s20.600-2.700 20.600-6v-9"/><ellipse cx="40.300" cy="39.800" rx="20.600" ry="6"/><path d="M19.700 39.800v10.500c0 3.300 9 6 20.600 6s20.600-2.700 20.600-6V39.800"/><path d="M28 35.500c3 1.500 8 2 12.300 2 5 0 9-.5 12-2" stroke="#999" stroke-width="0.800"/></g></svg></div>
<div class="card" style="left:561px;top:395px"><svg width="81" height="75" viewBox="0 -1 81 75"></svg></div>
<div class="card" style="left:95px;top:482px"><svg width="81" height="75" viewBox="0 0 81 75"><g fill="none" stroke="#454547" stroke-width="1.300" stroke-linejoin="round" stroke-linecap="round" ><path d="M31.9 24.3Q34.6 22.7 34.1 17.1Q36.6 15.8 39.3 15.8Q42.0 15.8 44.5 17.1Q44.0 22.7 46.7 24.3Q49.5 25.9 54.1 22.7Q56.5 24.1 57.9 26.5Q59.2 28.8 59.3 31.6Q54.2 34.0 54.2 37.2Q54.2 40.4 59.3 42.8Q59.2 45.6 57.9 47.9Q56.5 50.3 54.1 51.7Q49.5 48.5 46.7 50.1Q44.0 51.7 44.5 57.3Q42.0 58.6 39.3 58.6Q36.6 58.6 34.1 57.3Q34.6 51.7 31.9 50.1Q29.1 48.5 24.5 51.7Q22.1 50.3 20.7 47.9Q19.4 45.6 19.3 42.8Q24.4 40.4 24.4 37.2Q24.4 34.0 19.3 31.6Q19.4 28.8 20.7 26.5Q22.1 24.1 24.5 22.7Q29.1 25.9 31.9 24.3z"/><circle cx="39.3" cy="37.2" r="6"/></g></svg></div>
<div class="card" style="left:187px;top:482px"><svg width="81" height="75" viewBox="0 0 81 75"><g fill="none" stroke="#454547" stroke-width="1.300" stroke-linejoin="round" stroke-linecap="round" stroke-width="1.200" ><rect x="18.700" y="27.400" width="8.700" height="27.300"/><rect x="30.700" y="27.400" width="7.700" height="27.300"/><rect x="42.500" y="27.400" width="7.600" height="27.300"/><rect x="52.900" y="21.300" width="8.700" height="33.400"/><path d="M18.700 30h8.700M30.700 30h7.700M42.500 30h7.600" stroke-width="0.900"/></g></svg></div>
<div class="card" style="left:280px;top:482px"><svg width="81" height="75" viewBox="0 0 81 75"><g fill="none" stroke="#454547" stroke-width="1.300" stroke-linejoin="round" stroke-linecap="round" ><rect x="19.700" y="28.200" width="41.100" height="32"/><path d="M24.100 27.400L40.500 14.500 56.900 27.400M42 15.700L58.500 28"/></g></svg></div>
<div class="card" style="left:374px;top:482px"><svg width="81" height="75" viewBox="0 0 81 75"><clipPath id="cpr"><rect x="18.7" y="16.4" width="42.9" height="41.9" rx="8"/></clipPath><g clip-path="url(#cpr)"><path d="M-31.3 16.4l41.9 41.9M10.6 16.4l-41.9 41.9M-24.9 16.4l41.9 41.9M17.0 16.4l-41.9 41.9M-18.5 16.4l41.9 41.9M23.4 16.4l-41.9 41.9M-12.1 16.4l41.9 41.9M29.8 16.4l-41.9 41.9M-5.7 16.4l41.9 41.9M36.2 16.4l-41.9 41.9M0.7 16.4l41.9 41.9M42.6 16.4l-41.9 41.9M7.1 16.4l41.9 41.9M49.0 16.4l-41.9 41.9M13.5 16.4l41.9 41.9M55.4 16.4l-41.9 41.9M19.9 16.4l41.9 41.9M61.8 16.4l-41.9 41.9M26.3 16.4l41.9 41.9M68.2 16.4l-41.9 41.9M32.7 16.4l41.9 41.9M74.6 16.4l-41.9 41.9M39.1 16.4l41.9 41.9M81.0 16.4l-41.9 41.9M45.5 16.4l41.9 41.9M87.4 16.4l-41.9 41.9M51.9 16.4l41.9 41.9M93.8 16.4l-41.9 41.9M58.3 16.4l41.9 41.9M100.2 16.4l-41.9 41.9M64.7 16.4l41.9 41.9M106.6 16.4l-41.9 41.9M71.1 16.4l41.9 41.9M113.0 16.4l-41.9 41.9M77.5 16.4l41.9 41.9M119.4 16.4l-41.9 41.9M83.9 16.4l41.9 41.9M125.8 16.4l-41.9 41.9M90.3 16.4l41.9 41.9M132.2 16.4l-41.9 41.9M96.7 16.4l41.9 41.9M138.6 16.4l-41.9 41.9M103.1 16.4l41.9 41.9M145.0 16.4l-41.9 41.9M109.5 16.4l41.9 41.9M151.4 16.4l-41.9 41.9M115.9 16.4l41.9 41.9M157.8 16.4l-41.9 41.9" fill="none" stroke="#4a4a4c" stroke-width="1"/></g><g fill="none" stroke="#454547" stroke-width="1.300" stroke-linejoin="round" stroke-linecap="round" ><rect x="18.7" y="16.4" width="42.9" height="41.9" rx="8" stroke="#555" stroke-width="1.200"/></g></svg></div>
<div class="card" style="left:467px;top:482px"><svg width="81" height="75" viewBox="0 0 81 75"></svg></div>
<div class="card" style="left:561px;top:482px"><svg width="81" height="75" viewBox="0 0 81 75"></svg></div>
<div class="card" style="left:95px;top:569px"><svg width="81" height="75" viewBox="0 0 81 75"><path d="M20.7 19.4h.01M23.3 19.4h.01M25.9 19.4h.01M28.5 19.4h.01M31.1 19.4h.01M33.7 19.4h.01M36.3 19.4h.01M38.9 19.4h.01M41.5 19.4h.01M44.1 19.4h.01M46.7 19.4h.01M49.3 19.4h.01M51.9 19.4h.01M54.5 19.4h.01M57.1 19.4h.01M22.0 22.0h.01M24.6 22.0h.01M27.2 22.0h.01M29.8 22.0h.01M32.4 22.0h.01M35.0 22.0h.01M37.6 22.0h.01M40.2 22.0h.01M42.8 22.0h.01M45.4 22.0h.01M48.0 22.0h.01M50.6 22.0h.01M53.2 22.0h.01M55.8 22.0h.01M58.4 22.0h.01M20.7 24.6h.01M23.3 24.6h.01M25.9 24.6h.01M28.5 24.6h.01M31.1 24.6h.01M33.7 24.6h.01M36.3 24.6h.01M38.9 24.6h.01M41.5 24.6h.01M44.1 24.6h.01M46.7 24.6h.01M49.3 24.6h.01M51.9 24.6h.01M54.5 24.6h.01M57.1 24.6h.01M22.0 27.2h.01M24.6 27.2h.01M27.2 27.2h.01M29.8 27.2h.01M32.4 27.2h.01M35.0 27.2h.01M37.6 27.2h.01M40.2 27.2h.01M42.8 27.2h.01M45.4 27.2h.01M48.0 27.2h.01M50.6 27.2h.01M53.2 27.2h.01M55.8 27.2h.01M58.4 27.2h.01M20.7 29.8h.01M23.3 29.8h.01M25.9 29.8h.01M28.5 29.8h.01M31.1 29.8h.01M33.7 29.8h.01M36.3 29.8h.01M38.9 29.8h.01M41.5 29.8h.01M44.1 29.8h.01M46.7 29.8h.01M49.3 29.8h.01M51.9 29.8h.01M54.5 29.8h.01M57.1 29.8h.01M22.0 32.4h.01M24.6 32.4h.01M27.2 32.4h.01M29.8 32.4h.01M32.4 32.4h.01M35.0 32.4h.01M37.6 32.4h.01M40.2 32.4h.01M42.8 32.4h.01M45.4 32.4h.01M48.0 32.4h.01M50.6 32.4h.01M53.2 32.4h.01M55.8 32.4h.01M58.4 32.4h.01M20.7 35.0h.01M23.3 35.0h.01M25.9 35.0h.01M28.5 35.0h.01M31.1 35.0h.01M33.7 35.0h.01M36.3 35.0h.01M38.9 35.0h.01M41.5 35.0h.01M44.1 35.0h.01M46.7 35.0h.01M49.3 35.0h.01M51.9 35.0h.01M54.5 35.0h.01M57.1 35.0h.01M22.0 37.6h.01M24.6 37.6h.01M27.2 37.6h.01M29.8 37.6h.01M32.4 37.6h.01M35.0 37.6h.01M37.6 37.6h.01M40.2 37.6h.01M42.8 37.6h.01M45.4 37.6h.01M48.0 37.6h.01M50.6 37.6h.01M53.2 37.6h.01M55.8 37.6h.01M58.4 37.6h.01M20.7 40.2h.01M23.3 40.2h.01M25.9 40.2h.01M28.5 40.2h.01M31.1 40.2h.01M33.7 40.2h.01M36.3 40.2h.01M38.9 40.2h.01M41.5 40.2h.01M44.1 40.2h.01M46.7 40.2h.01M49.3 40.2h.01M51.9 40.2h.01M54.5 40.2h.01M57.1 40.2h.01M22.0 42.8h.01M24.6 42.8h.01M27.2 42.8h.01M29.8 42.8h.01M32.4 42.8h.01M35.0 42.8h.01M37.6 42.8h.01M40.2 42.8h.01M42.8 42.8h.01M45.4 42.8h.01M48.0 42.8h.01M50.6 42.8h.01M53.2 42.8h.01M55.8 42.8h.01M58.4 42.8h.01M20.7 45.4h.01M23.3 45.4h.01M25.9 45.4h.01M28.5 45.4h.01M31.1 45.4h.01M33.7 45.4h.01M36.3 45.4h.01M38.9 45.4h.01M41.5 45.4h.01M44.1 45.4h.01M46.7 45.4h.01M49.3 45.4h.01M51.9 45.4h.01M54.5 45.4h.01M57.1 45.4h.01M22.0 48.0h.01M24.6 48.0h.01M27.2 48.0h.01M29.8 48.0h.01M32.4 48.0h.01M35.0 48.0h.01M37.6 48.0h.01M40.2 48.0h.01M42.8 48.0h.01M45.4 48.0h.01M48.0 48.0h.01M50.6 48.0h.01M53.2 48.0h.01M55.8 48.0h.01M58.4 48.0h.01M20.7 50.6h.01M23.3 50.6h.01M25.9 50.6h.01M28.5 50.6h.01M31.1 50.6h.01M33.7 50.6h.01M36.3 50.6h.01M38.9 50.6h.01M41.5 50.6h.01M44.1 50.6h.01M46.7 50.6h.01M49.3 50.6h.01M51.9 50.6h.01M54.5 50.6h.01M57.1 50.6h.01M22.0 53.2h.01M24.6 53.2h.01M27.2 53.2h.01M29.8 53.2h.01M32.4 53.2h.01M35.0 53.2h.01M37.6 53.2h.01M40.2 53.2h.01M42.8 53.2h.01M45.4 53.2h.01M48.0 53.2h.01M50.6 53.2h.01M53.2 53.2h.01M55.8 53.2h.01M58.4 53.2h.01M20.7 55.8h.01M23.3 55.8h.01M25.9 55.8h.01M28.5 55.8h.01M31.1 55.8h.01M33.7 55.8h.01M36.3 55.8h.01M38.9 55.8h.01M41.5 55.8h.01M44.1 55.8h.01M46.7 55.8h.01M49.3 55.8h.01M51.9 55.8h.01M54.5 55.8h.01M57.1 55.8h.01" fill="none" stroke="#d5d5d5" stroke-width="0.70" stroke-linecap="round"/><rect x="19.1" y="17.8" width="40.7" height="41" fill="none" stroke="#858587" stroke-width="1.1"/></svg></div>
<div class="card" style="left:187px;top:569px"><svg width="81" height="75" viewBox="0 0 81 75"><clipPath id="p51"><rect x="19.2" y="17.8" width="41.8" height="41"/></clipPath><g clip-path="url(#p51)"><path d="M-21.8 17.8l41 41M-18.4 17.8l41 41M-15.0 17.8l41 41M-11.6 17.8l41 41M-8.2 17.8l41 41M-4.8 17.8l41 41M-1.4 17.8l41 41M2.0 17.8l41 41M5.4 17.8l41 41M8.8 17.8l41 41M12.2 17.8l41 41M15.6 17.8l41 41M19.0 17.8l41 41M22.4 17.8l41 41M25.8 17.8l41 41M29.2 17.8l41 41M32.6 17.8l41 41M36.0 17.8l41 41M39.4 17.8l41 41M42.8 17.8l41 41M46.2 17.8l41 41M49.6 17.8l41 41M53.0 17.8l41 41M56.4 17.8l41 41M59.8 17.8l41 41M63.2 17.8l41 41M66.6 17.8l41 41M70.0 17.8l41 41M73.4 17.8l41 41M76.8 17.8l41 41M80.2 17.8l41 41M83.6 17.8l41 41M87.0 17.8l41 41M90.4 17.8l41 41M93.8 17.8l41 41M97.2 17.8l41 41M100.6 17.8l41 41" fill="none" stroke="#666" stroke-width="0.65"/></g><rect x="19.2" y="17.8" width="41.8" height="41" fill="none" stroke="#444" stroke-width="1.1"/></svg></div>
<div class="card" style="left:280px;top:569px"><svg width="81" height="75" viewBox="0 0 81 75"><clipPath id="p52"><rect x="19.7" y="17.2" width="41.9" height="41.8"/></clipPath><g clip-path="url(#p52)"><path d="M-22.1 59.0l41.8 -41.8M-22.1 17.2l41.8 41.8M-18.1 59.0l41.8 -41.8M-18.1 17.2l41.8 41.8M-14.1 59.0l41.8 -41.8M-14.1 17.2l41.8 41.8M-10.1 59.0l41.8 -41.8M-10.1 17.2l41.8 41.8M-6.1 59.0l41.8 -41.8M-6.1 17.2l41.8 41.8M-2.1 59.0l41.8 -41.8M-2.1 17.2l41.8 41.8M1.9 59.0l41.8 -41.8M1.9 17.2l41.8 41.8M5.9 59.0l41.8 -41.8M5.9 17.2l41.8 41.8M9.9 59.0l41.8 -41.8M9.9 17.2l41.8 41.8M13.9 59.0l41.8 -41.8M13.9 17.2l41.8 41.8M17.9 59.0l41.8 -41.8M17.9 17.2l41.8 41.8M21.9 59.0l41.8 -41.8M21.9 17.2l41.8 41.8M25.9 59.0l41.8 -41.8M25.9 17.2l41.8 41.8M29.9 59.0l41.8 -41.8M29.9 17.2l41.8 41.8M33.9 59.0l41.8 -41.8M33.9 17.2l41.8 41.8M37.9 59.0l41.8 -41.8M37.9 17.2l41.8 41.8M41.9 59.0l41.8 -41.8M41.9 17.2l41.8 41.8M45.9 59.0l41.8 -41.8M45.9 17.2l41.8 41.8M49.9 59.0l41.8 -41.8M49.9 17.2l41.8 41.8M53.9 59.0l41.8 -41.8M53.9 17.2l41.8 41.8M57.9 59.0l41.8 -41.8M57.9 17.2l41.8 41.8M61.9 59.0l41.8 -41.8M61.9 17.2l41.8 41.8M65.9 59.0l41.8 -41.8M65.9 17.2l41.8 41.8M69.9 59.0l41.8 -41.8M69.9 17.2l41.8 41.8M73.9 59.0l41.8 -41.8M73.9 17.2l41.8 41.8M77.9 59.0l41.8 -41.8M77.9 17.2l41.8 41.8M81.9 59.0l41.8 -41.8M81.9 17.2l41.8 41.8M85.9 59.0l41.8 -41.8M85.9 17.2l41.8 41.8M89.9 59.0l41.8 -41.8M89.9 17.2l41.8 41.8M93.9 59.0l41.8 -41.8M93.9 17.2l41.8 41.8M97.9 59.0l41.8 -41.8M97.9 17.2l41.8 41.8M101.9 59.0l41.8 -41.8M101.9 17.2l41.8 41.8" fill="none" stroke="#6a6a6a" stroke-width="0.65"/></g><rect x="19.7" y="17.2" width="41.9" height="41.8" fill="none" stroke="#555" stroke-width="1.1"/></svg></div>
<div class="card" style="left:374px;top:569px"><svg width="81" height="75" viewBox="0 0 81 75"><clipPath id="p53"><rect x="19.2" y="17.8" width="42.4" height="41"/></clipPath><g clip-path="url(#p53)"><path d="M-21.8 58.8l41 -41M-18.5 58.8l41 -41M-15.2 58.8l41 -41M-11.9 58.8l41 -41M-8.6 58.8l41 -41M-5.3 58.8l41 -41M-2.0 58.8l41 -41M1.3 58.8l41 -41M4.6 58.8l41 -41M7.9 58.8l41 -41M11.2 58.8l41 -41M14.5 58.8l41 -41M17.8 58.8l41 -41M21.1 58.8l41 -41M24.4 58.8l41 -41M27.7 58.8l41 -41M31.0 58.8l41 -41M34.3 58.8l41 -41M37.6 58.8l41 -41M40.9 58.8l41 -41M44.2 58.8l41 -41M47.5 58.8l41 -41M50.8 58.8l41 -41M54.1 58.8l41 -41M57.4 58.8l41 -41M60.7 58.8l41 -41M64.0 58.8l41 -41M67.3 58.8l41 -41M70.6 58.8l41 -41M73.9 58.8l41 -41M77.2 58.8l41 -41M80.5 58.8l41 -41M83.8 58.8l41 -41M87.1 58.8l41 -41M90.4 58.8l41 -41M93.7 58.8l41 -41M97.0 58.8l41 -41M100.3 58.8l41 -41" fill="none" stroke="#6a6a6a" stroke-width="0.65"/></g><rect x="19.2" y="17.8" width="42.4" height="41" fill="none" stroke="#555" stroke-width="1.1"/></svg></div>
<div class="card" style="left:467px;top:569px"><svg width="81" height="75" viewBox="0 0 81 75"><clipPath id="p54"><rect x="20" y="17.8" width="41.6" height="41"/></clipPath><g clip-path="url(#p54)"><path d="M-21.0 58.8l41 -41M-16.4 58.8l41 -41M-11.8 58.8l41 -41M-7.2 58.8l41 -41M-2.6 58.8l41 -41M2.0 58.8l41 -41M6.6 58.8l41 -41M11.2 58.8l41 -41M15.8 58.8l41 -41M20.4 58.8l41 -41M25.0 58.8l41 -41M29.6 58.8l41 -41M34.2 58.8l41 -41M38.8 58.8l41 -41M43.4 58.8l41 -41M48.0 58.8l41 -41M52.6 58.8l41 -41M57.2 58.8l41 -41M61.8 58.8l41 -41M66.4 58.8l41 -41M71.0 58.8l41 -41M75.6 58.8l41 -41M80.2 58.8l41 -41M84.8 58.8l41 -41M89.4 58.8l41 -41M94.0 58.8l41 -41M98.6 58.8l41 -41" fill="none" stroke="#6a6a6a" stroke-width="0.75"/></g><rect x="20" y="17.8" width="41.6" height="41" fill="none" stroke="#555" stroke-width="1.1"/></svg></div>
<div class="card" style="left:561px;top:569px"><svg width="81" height="75" viewBox="0 0 81 75"></svg></div>
<div class="card" style="left:95px;top:657px"><svg width="81" height="75" viewBox="0 0 81 75"><rect x="19.600" y="17.600" width="40.200" height="40.200" fill="none" stroke="#b0b0b2" stroke-width="1.100"/></svg></div>
<div class="card" style="left:187px;top:657px"><svg width="81" height="75" viewBox="0 0 81 75"><rect x="20.600" y="18.400" width="39.600" height="38.300" fill="none" stroke="#5a5a5c" stroke-width="1.300"/></svg></div>
<div class="card" style="left:280px;top:657px"><svg width="81" height="75" viewBox="0 0 81 75"><path d="M21.3 18.3h.01M24.3 18.3h.01M27.3 18.3h.01M30.3 18.3h.01M33.3 18.3h.01M36.3 18.3h.01M39.3 18.3h.01M42.3 18.3h.01M45.3 18.3h.01M48.3 18.3h.01M51.3 18.3h.01M54.3 18.3h.01M57.3 18.3h.01M60.3 18.3h.01M22.8 21.3h.01M25.8 21.3h.01M28.8 21.3h.01M31.8 21.3h.01M34.8 21.3h.01M37.8 21.3h.01M40.8 21.3h.01M43.8 21.3h.01M46.8 21.3h.01M49.8 21.3h.01M52.8 21.3h.01M55.8 21.3h.01M58.8 21.3h.01M21.3 24.3h.01M24.3 24.3h.01M27.3 24.3h.01M30.3 24.3h.01M33.3 24.3h.01M36.3 24.3h.01M39.3 24.3h.01M42.3 24.3h.01M45.3 24.3h.01M48.3 24.3h.01M51.3 24.3h.01M54.3 24.3h.01M57.3 24.3h.01M60.3 24.3h.01M22.8 27.3h.01M25.8 27.3h.01M28.8 27.3h.01M31.8 27.3h.01M34.8 27.3h.01M37.8 27.3h.01M40.8 27.3h.01M43.8 27.3h.01M46.8 27.3h.01M49.8 27.3h.01M52.8 27.3h.01M55.8 27.3h.01M58.8 27.3h.01M21.3 30.3h.01M24.3 30.3h.01M27.3 30.3h.01M30.3 30.3h.01M33.3 30.3h.01M36.3 30.3h.01M39.3 30.3h.01M42.3 30.3h.01M45.3 30.3h.01M48.3 30.3h.01M51.3 30.3h.01M54.3 30.3h.01M57.3 30.3h.01M60.3 30.3h.01M22.8 33.3h.01M25.8 33.3h.01M28.8 33.3h.01M31.8 33.3h.01M34.8 33.3h.01M37.8 33.3h.01M40.8 33.3h.01M43.8 33.3h.01M46.8 33.3h.01M49.8 33.3h.01M52.8 33.3h.01M55.8 33.3h.01M58.8 33.3h.01M21.3 36.3h.01M24.3 36.3h.01M27.3 36.3h.01M30.3 36.3h.01M33.3 36.3h.01M36.3 36.3h.01M39.3 36.3h.01M42.3 36.3h.01M45.3 36.3h.01M48.3 36.3h.01M51.3 36.3h.01M54.3 36.3h.01M57.3 36.3h.01M60.3 36.3h.01M22.8 39.3h.01M25.8 39.3h.01M28.8 39.3h.01M31.8 39.3h.01M34.8 39.3h.01M37.8 39.3h.01M40.8 39.3h.01M43.8 39.3h.01M46.8 39.3h.01M49.8 39.3h.01M52.8 39.3h.01M55.8 39.3h.01M58.8 39.3h.01M21.3 42.3h.01M24.3 42.3h.01M27.3 42.3h.01M30.3 42.3h.01M33.3 42.3h.01M36.3 42.3h.01M39.3 42.3h.01M42.3 42.3h.01M45.3 42.3h.01M48.3 42.3h.01M51.3 42.3h.01M54.3 42.3h.01M57.3 42.3h.01M60.3 42.3h.01M22.8 45.3h.01M25.8 45.3h.01M28.8 45.3h.01M31.8 45.3h.01M34.8 45.3h.01M37.8 45.3h.01M40.8 45.3h.01M43.8 45.3h.01M46.8 45.3h.01M49.8 45.3h.01M52.8 45.3h.01M55.8 45.3h.01M58.8 45.3h.01M21.3 48.3h.01M24.3 48.3h.01M27.3 48.3h.01M30.3 48.3h.01M33.3 48.3h.01M36.3 48.3h.01M39.3 48.3h.01M42.3 48.3h.01M45.3 48.3h.01M48.3 48.3h.01M51.3 48.3h.01M54.3 48.3h.01M57.3 48.3h.01M60.3 48.3h.01M22.8 51.3h.01M25.8 51.3h.01M28.8 51.3h.01M31.8 51.3h.01M34.8 51.3h.01M37.8 51.3h.01M40.8 51.3h.01M43.8 51.3h.01M46.8 51.3h.01M49.8 51.3h.01M52.8 51.3h.01M55.8 51.3h.01M58.8 51.3h.01M21.3 54.3h.01M24.3 54.3h.01M27.3 54.3h.01M30.3 54.3h.01M33.3 54.3h.01M36.3 54.3h.01M39.3 54.3h.01M42.3 54.3h.01M45.3 54.3h.01M48.3 54.3h.01M51.3 54.3h.01M54.3 54.3h.01M57.3 54.3h.01M60.3 54.3h.01M22.8 57.3h.01M25.8 57.3h.01M28.8 57.3h.01M31.8 57.3h.01M34.8 57.3h.01M37.8 57.3h.01M40.8 57.3h.01M43.8 57.3h.01M46.8 57.3h.01M49.8 57.3h.01M52.8 57.3h.01M55.8 57.3h.01M58.8 57.3h.01" fill="none" stroke="#707070" stroke-width="1.50" stroke-linecap="round"/><rect x="19.5" y="16.5" width="42" height="42" fill="none" stroke="#666" stroke-width="1.1"/></svg></div>
<div class="card" style="left:374px;top:657px"><svg width="81" height="75" viewBox="0 0 81 75"><path d="M19.7 17.7h.01M21.7 17.7h.01M23.7 17.7h.01M25.7 17.7h.01M27.7 17.7h.01M29.7 17.7h.01M31.7 17.7h.01M33.7 17.7h.01M35.7 17.7h.01M37.7 17.7h.01M39.7 17.7h.01M41.7 17.7h.01M43.7 17.7h.01M45.7 17.7h.01M47.7 17.7h.01M49.7 17.7h.01M51.7 17.7h.01M53.7 17.7h.01M55.7 17.7h.01M57.7 17.7h.01M59.7 17.7h.01M20.7 19.7h.01M22.7 19.7h.01M24.7 19.7h.01M26.7 19.7h.01M28.7 19.7h.01M30.7 19.7h.01M32.7 19.7h.01M34.7 19.7h.01M36.7 19.7h.01M38.7 19.7h.01M40.7 19.7h.01M42.7 19.7h.01M44.7 19.7h.01M46.7 19.7h.01M48.7 19.7h.01M50.7 19.7h.01M52.7 19.7h.01M54.7 19.7h.01M56.7 19.7h.01M58.7 19.7h.01M60.7 19.7h.01M19.7 21.7h.01M21.7 21.7h.01M23.7 21.7h.01M25.7 21.7h.01M27.7 21.7h.01M29.7 21.7h.01M31.7 21.7h.01M33.7 21.7h.01M35.7 21.7h.01M37.7 21.7h.01M39.7 21.7h.01M41.7 21.7h.01M43.7 21.7h.01M45.7 21.7h.01M47.7 21.7h.01M49.7 21.7h.01M51.7 21.7h.01M53.7 21.7h.01M55.7 21.7h.01M57.7 21.7h.01M59.7 21.7h.01M20.7 23.7h.01M22.7 23.7h.01M24.7 23.7h.01M26.7 23.7h.01M28.7 23.7h.01M30.7 23.7h.01M32.7 23.7h.01M34.7 23.7h.01M36.7 23.7h.01M38.7 23.7h.01M40.7 23.7h.01M42.7 23.7h.01M44.7 23.7h.01M46.7 23.7h.01M48.7 23.7h.01M50.7 23.7h.01M52.7 23.7h.01M54.7 23.7h.01M56.7 23.7h.01M58.7 23.7h.01M60.7 23.7h.01M19.7 25.7h.01M21.7 25.7h.01M23.7 25.7h.01M25.7 25.7h.01M27.7 25.7h.01M29.7 25.7h.01M31.7 25.7h.01M33.7 25.7h.01M35.7 25.7h.01M37.7 25.7h.01M39.7 25.7h.01M41.7 25.7h.01M43.7 25.7h.01M45.7 25.7h.01M47.7 25.7h.01M49.7 25.7h.01M51.7 25.7h.01M53.7 25.7h.01M55.7 25.7h.01M57.7 25.7h.01M59.7 25.7h.01M20.7 27.7h.01M22.7 27.7h.01M24.7 27.7h.01M26.7 27.7h.01M28.7 27.7h.01M30.7 27.7h.01M32.7 27.7h.01M34.7 27.7h.01M36.7 27.7h.01M38.7 27.7h.01M40.7 27.7h.01M42.7 27.7h.01M44.7 27.7h.01M46.7 27.7h.01M48.7 27.7h.01M50.7 27.7h.01M52.7 27.7h.01M54.7 27.7h.01M56.7 27.7h.01M58.7 27.7h.01M60.7 27.7h.01M19.7 29.7h.01M21.7 29.7h.01M23.7 29.7h.01M25.7 29.7h.01M27.7 29.7h.01M29.7 29.7h.01M31.7 29.7h.01M33.7 29.7h.01M35.7 29.7h.01M37.7 29.7h.01M39.7 29.7h.01M41.7 29.7h.01M43.7 29.7h.01M45.7 29.7h.01M47.7 29.7h.01M49.7 29.7h.01M51.7 29.7h.01M53.7 29.7h.01M55.7 29.7h.01M57.7 29.7h.01M59.7 29.7h.01M20.7 31.7h.01M22.7 31.7h.01M24.7 31.7h.01M26.7 31.7h.01M28.7 31.7h.01M30.7 31.7h.01M32.7 31.7h.01M34.7 31.7h.01M36.7 31.7h.01M38.7 31.7h.01M40.7 31.7h.01M42.7 31.7h.01M44.7 31.7h.01M46.7 31.7h.01M48.7 31.7h.01M50.7 31.7h.01M52.7 31.7h.01M54.7 31.7h.01M56.7 31.7h.01M58.7 31.7h.01M60.7 31.7h.01M19.7 33.7h.01M21.7 33.7h.01M23.7 33.7h.01M25.7 33.7h.01M27.7 33.7h.01M29.7 33.7h.01M31.7 33.7h.01M33.7 33.7h.01M35.7 33.7h.01M37.7 33.7h.01M39.7 33.7h.01M41.7 33.7h.01M43.7 33.7h.01M45.7 33.7h.01M47.7 33.7h.01M49.7 33.7h.01M51.7 33.7h.01M53.7 33.7h.01M55.7 33.7h.01M57.7 33.7h.01M59.7 33.7h.01M20.7 35.7h.01M22.7 35.7h.01M24.7 35.7h.01M26.7 35.7h.01M28.7 35.7h.01M30.7 35.7h.01M32.7 35.7h.01M34.7 35.7h.01M36.7 35.7h.01M38.7 35.7h.01M40.7 35.7h.01M42.7 35.7h.01M44.7 35.7h.01M46.7 35.7h.01M48.7 35.7h.01M50.7 35.7h.01M52.7 35.7h.01M54.7 35.7h.01M56.7 35.7h.01M58.7 35.7h.01M60.7 35.7h.01M19.7 37.7h.01M21.7 37.7h.01M23.7 37.7h.01M25.7 37.7h.01M27.7 37.7h.01M29.7 37.7h.01M31.7 37.7h.01M33.7 37.7h.01M35.7 37.7h.01M37.7 37.7h.01M39.7 37.7h.01M41.7 37.7h.01M43.7 37.7h.01M45.7 37.7h.01M47.7 37.7h.01M49.7 37.7h.01M51.7 37.7h.01M53.7 37.7h.01M55.7 37.7h.01M57.7 37.7h.01M59.7 37.7h.01M20.7 39.7h.01M22.7 39.7h.01M24.7 39.7h.01M26.7 39.7h.01M28.7 39.7h.01M30.7 39.7h.01M32.7 39.7h.01M34.7 39.7h.01M36.7 39.7h.01M38.7 39.7h.01M40.7 39.7h.01M42.7 39.7h.01M44.7 39.7h.01M46.7 39.7h.01M48.7 39.7h.01M50.7 39.7h.01M52.7 39.7h.01M54.7 39.7h.01M56.7 39.7h.01M58.7 39.7h.01M60.7 39.7h.01M19.7 41.7h.01M21.7 41.7h.01M23.7 41.7h.01M25.7 41.7h.01M27.7 41.7h.01M29.7 41.7h.01M31.7 41.7h.01M33.7 41.7h.01M35.7 41.7h.01M37.7 41.7h.01M39.7 41.7h.01M41.7 41.7h.01M43.7 41.7h.01M45.7 41.7h.01M47.7 41.7h.01M49.7 41.7h.01M51.7 41.7h.01M53.7 41.7h.01M55.7 41.7h.01M57.7 41.7h.01M59.7 41.7h.01M20.7 43.7h.01M22.7 43.7h.01M24.7 43.7h.01M26.7 43.7h.01M28.7 43.7h.01M30.7 43.7h.01M32.7 43.7h.01M34.7 43.7h.01M36.7 43.7h.01M38.7 43.7h.01M40.7 43.7h.01M42.7 43.7h.01M44.7 43.7h.01M46.7 43.7h.01M48.7 43.7h.01M50.7 43.7h.01M52.7 43.7h.01M54.7 43.7h.01M56.7 43.7h.01M58.7 43.7h.01M60.7 43.7h.01M19.7 45.7h.01M21.7 45.7h.01M23.7 45.7h.01M25.7 45.7h.01M27.7 45.7h.01M29.7 45.7h.01M31.7 45.7h.01M33.7 45.7h.01M35.7 45.7h.01M37.7 45.7h.01M39.7 45.7h.01M41.7 45.7h.01M43.7 45.7h.01M45.7 45.7h.01M47.7 45.7h.01M49.7 45.7h.01M51.7 45.7h.01M53.7 45.7h.01M55.7 45.7h.01M57.7 45.7h.01M59.7 45.7h.01M20.7 47.7h.01M22.7 47.7h.01M24.7 47.7h.01M26.7 47.7h.01M28.7 47.7h.01M30.7 47.7h.01M32.7 47.7h.01M34.7 47.7h.01M36.7 47.7h.01M38.7 47.7h.01M40.7 47.7h.01M42.7 47.7h.01M44.7 47.7h.01M46.7 47.7h.01M48.7 47.7h.01M50.7 47.7h.01M52.7 47.7h.01M54.7 47.7h.01M56.7 47.7h.01M58.7 47.7h.01M60.7 47.7h.01M19.7 49.7h.01M21.7 49.7h.01M23.7 49.7h.01M25.7 49.7h.01M27.7 49.7h.01M29.7 49.7h.01M31.7 49.7h.01M33.7 49.7h.01M35.7 49.7h.01M37.7 49.7h.01M39.7 49.7h.01M41.7 49.7h.01M43.7 49.7h.01M45.7 49.7h.01M47.7 49.7h.01M49.7 49.7h.01M51.7 49.7h.01M53.7 49.7h.01M55.7 49.7h.01M57.7 49.7h.01M59.7 49.7h.01M20.7 51.7h.01M22.7 51.7h.01M24.7 51.7h.01M26.7 51.7h.01M28.7 51.7h.01M30.7 51.7h.01M32.7 51.7h.01M34.7 51.7h.01M36.7 51.7h.01M38.7 51.7h.01M40.7 51.7h.01M42.7 51.7h.01M44.7 51.7h.01M46.7 51.7h.01M48.7 51.7h.01M50.7 51.7h.01M52.7 51.7h.01M54.7 51.7h.01M56.7 51.7h.01M58.7 51.7h.01M60.7 51.7h.01M19.7 53.7h.01M21.7 53.7h.01M23.7 53.7h.01M25.7 53.7h.01M27.7 53.7h.01M29.7 53.7h.01M31.7 53.7h.01M33.7 53.7h.01M35.7 53.7h.01M37.7 53.7h.01M39.7 53.7h.01M41.7 53.7h.01M43.7 53.7h.01M45.7 53.7h.01M47.7 53.7h.01M49.7 53.7h.01M51.7 53.7h.01M53.7 53.7h.01M55.7 53.7h.01M57.7 53.7h.01M59.7 53.7h.01M20.7 55.7h.01M22.7 55.7h.01M24.7 55.7h.01M26.7 55.7h.01M28.7 55.7h.01M30.7 55.7h.01M32.7 55.7h.01M34.7 55.7h.01M36.7 55.7h.01M38.7 55.7h.01M40.7 55.7h.01M42.7 55.7h.01M44.7 55.7h.01M46.7 55.7h.01M48.7 55.7h.01M50.7 55.7h.01M52.7 55.7h.01M54.7 55.7h.01M56.7 55.7h.01M58.7 55.7h.01M60.7 55.7h.01" fill="none" stroke="#666" stroke-width="1.04" stroke-linecap="round"/><rect x="18.5" y="16.5" width="43" height="41" fill="none" stroke="#666" stroke-width="1.1"/></svg></div>
<div class="card" style="left:467px;top:657px"><svg width="81" height="75" viewBox="0 0 81 75"><rect x="19.500" y="16.800" width="41.800" height="41" fill="none" stroke="#555" stroke-width="1.300"/></svg></div>
<div class="card" style="left:561px;top:657px"><svg width="81" height="75" viewBox="0 0 81 75"></svg></div>
<div class="card" style="left:95px;top:743px;width:267px;height:40px"></div>
<div class="abs" style="left:655px;top:395px;width:79px;height:1px;background:#e9e9ec"></div>
<div class="bdg" style="left:589px;top:294px;width:24px;height:12px">L/N</div>
<div class="bdg" style="left:587px;top:381px;width:27px;height:12px">0:DO</div>
<svg class="abs" style="left:630.0px;top:314.1px" width="13" height="13" viewBox="0 0 13 13"><circle cx="6.500" cy="6.500" r="6.300" fill="#8f8f93"/><path d="M4.300 8.700L8.300 4.700" stroke="#f4f4f4" stroke-width="1.600" stroke-linecap="round"/></svg>
<svg class="abs" style="left:722.7px;top:314.1px" width="13" height="13" viewBox="0 0 13 13"><circle cx="6.500" cy="6.500" r="6.300" fill="#a3a3a7"/><path d="M4.300 8.700L8.300 4.700" stroke="#f4f4f4" stroke-width="1.600" stroke-linecap="round"/></svg>
<svg class="abs" style="left:688.3px;top:379.7px" width="15" height="15" viewBox="0 0 15 15"><path d="M7.500 14C4 12 .8 9.500 .8 5.800.8 2.600 3.500.8 7.500.8s6.700 1.800 6.700 5c0 3.700-3.200 6.200-6.700 8.200z" fill="#8e8e92"/><text x="7.500" y="9" font-size="6" text-anchor="middle" fill="#f0f0f0" font-family="Liberation Sans,sans-serif">♥</text></svg>
<svg class="abs" style="left:499.1px;top:464.8px" width="15" height="15" viewBox="0 0 15 15"><path d="M7.500 14C4 12 .8 9.500 .8 5.800.8 2.600 3.500.8 7.500.8s6.700 1.800 6.700 5c0 3.700-3.200 6.200-6.700 8.200z" fill="#8e8e92"/><text x="7.500" y="9" font-size="6" text-anchor="middle" fill="#f0f0f0" font-family="Liberation Sans,sans-serif">i</text></svg>
<svg class="abs" style="left:257px;top:400px" width="9" height="9" viewBox="0 0 9 9"><path d="M1 2h5l2 2v4H1z" fill="none" stroke="#555" stroke-width="1"/><path d="M3 5h3" stroke="#555" stroke-width="1"/></svg>
<svg class="abs" style="left:187px;top:458px" width="10" height="10" viewBox="0 0 10 10"><path d="M1 2h6l2 2-2 5-5-2z" fill="none" stroke="#555" stroke-width="1"/><path d="M4 4l2 2" stroke="#555" stroke-width="1"/></svg>
</div>
<div class="abs" style="left:95px;top:87px;font-size:15.500px;line-height:20px;color:#1d1d1f;white-space:nowrap;letter-spacing:-0.2px;-webkit-text-stroke:0.3px #1d1d1f">DesignSctın</div>
<div class="abs" style="left:178px;top:85px;width:81px;height:24px;border-radius:4px;background:#ececee"></div>
<div class="abs" style="left:181px;top:87px;font-size:15.500px;line-height:20px;color:#2a2a2c;white-space:nowrap;letter-spacing:-0.2px;-webkit-text-stroke:0.3px #2a2a2c">Labray</div>
<div class="abs" style="left:239px;top:90px;font-size:11px;line-height:14px;color:#555;white-space:nowrap">ⵐ</div>
<svg class="abs" style="left:723px;top:90px" width="12" height="12" viewBox="0 0 12 12"><path d="M1.700 1.700l8.600 8.600M10.300 1.700l-8.600 8.600" stroke="#6a6a6e" stroke-width="1.100" fill="none"/></svg>
<div class="abs" style="left:95px;top:118px;font-size:9.500px;line-height:12px;color:#3c3c3e;white-space:nowrap;-webkit-text-stroke:0.25px #3c3c3e;letter-spacing:-0.1px">Sn a dcayected</div>
<div class="abs" style="left:171px;top:122px;width:578px;height:1px;background:#e6e6e9"></div>

<div class="abs" style="left:41px;top:753px;width:750px;height:15px;background:#eeeeef"></div>
<div class="abs" style="left:52px;top:755px;font-size:9px;line-height:12px;color:#58585c;white-space:nowrap;letter-spacing:0.15px">Onanbcorencamaill saedbdaoe: บ๒9cb個 /</div>

<div id="rp">
<div class="abs" style="left:0;top:0;width:233px;height:37px;background:#1e1e21"></div>
<div class="abs" style="left:0;top:6px;width:73px;height:32px;background:#2c2c30;border-radius:3px 3px 0 0"></div>
<div class="abs" style="left:12px;top:13px;font-size:10.500px;line-height:16px;color:#e6e6ea;white-space:nowrap;letter-spacing:-0.3px">設態 stcva</div>
<svg class="abs" style="left:210px;top:14px" width="12" height="11" viewBox="0 0 12 11"><rect x="0" y="0" width="2" height="2" fill="#77777d"/><rect x="5" y="0" width="2" height="2" fill="#77777d"/><rect x="10" y="0" width="2" height="2" fill="#77777d"/><rect x="0" y="4.5" width="2" height="2" fill="#77777d"/><rect x="5" y="4.5" width="2" height="2" fill="#77777d"/><rect x="10" y="4.5" width="2" height="2" fill="#77777d"/><rect x="0" y="9" width="2" height="2" fill="#77777d"/><rect x="5" y="9" width="2" height="2" fill="#77777d"/><rect x="10" y="9" width="2" height="2" fill="#77777d"/></svg>
<div class="abs" style="left:9px;top:51px;width:200px;height:25px;background:#1f1f22;border-radius:3px 0 0 3px"></div>
<svg class="abs" style="left:15px;top:57px" width="12" height="12" viewBox="0 0 12 12"><circle cx="4.800" cy="4.800" r="3.600" fill="none" stroke="#a6a6ab" stroke-width="1.200"/><path d="M7.500 7.500l3.500 3.500" stroke="#a6a6ab" stroke-width="1.300"/></svg>
<div class="abs" style="left:31px;top:57px;font-size:9.500px;line-height:13px;color:#8d8d93;white-space:nowrap;letter-spacing:-0.3px">Stoesiogn</div>
<div class="abs" style="left:209px;top:51px;width:24px;height:25px;background:#3f6fae"></div>
<svg class="abs" style="left:215px;top:57px" width="12" height="12" viewBox="0 0 12 12"><path d="M1 6h7M6 2l4 3-6 5M8 2L5 9" fill="none" stroke="#dfe9f7" stroke-width="1.100"/></svg>
<div class="row" style="left:0px;top:86px;width:233px;height:33px;background:#2e2e32;border-top-color:#232326"><svg class="abs" style="left:12px;top:8.5px" width="15" height="14" viewBox="0 0 15 14"><path d="M1.500 3.500C3 1 6 1.500 7.500 3.500 9 1.500 12 1 13.500 3.500 13.500 8 10 11 7.500 12.500 5 11 1.500 8 1.500 3.500z" fill="none" stroke="#d6d6da" stroke-width="1.500"/></svg><div class="tx" style="left:45px;top:7.7px;color:#d2d2d6;font-size:10.5px;letter-spacing:-0.2px">Ighն改全匯</div><div class="pill" style="top:7.0px"><svg width="23" height="17" viewBox="0 0 23 17"><path d="M8 7l3.500 3.500L15 7" fill="none" stroke="#333" stroke-width="1.500"/></svg></div></div>
<div class="row" style="left:0px;top:119px;width:233px;height:33px;background:#2e2e32;border-top-color:#232326"><div class="ar" style="left:27.5px;top:11.5px;border-left-color:#c9c9cd"></div><div class="tx" style="left:45px;top:7.7px;color:#bdbdc2;font-size:10.5px;letter-spacing:-0.2px">推賀悕寰</div><div class="pill" style="top:7.0px"><svg width="23" height="17" viewBox="0 0 23 17"><path d="M8 6l3 5h-4zM12 5l3 3-3 3M8 11h6" fill="none" stroke="#444" stroke-width="1.100"/></svg></div></div>
<div class="row" style="left:0px;top:152px;width:233px;height:33px;background:#2e2e32;border-top-color:#232326"><div class="ar" style="left:27.5px;top:11.5px;border-left-color:#c9c9cd"></div><svg class="abs" style="left:45px;top:5px;background:#f1f1f1" width="21" height="21" viewBox="0 0 21 21"><path d="M0.0 0.0h1.75v1.75h-1.75zM1.8 0.0h1.75v1.75h-1.75zM5.2 0.0h1.75v1.75h-1.75zM7.0 0.0h1.75v1.75h-1.75zM15.8 0.0h1.75v1.75h-1.75zM19.2 0.0h1.75v1.75h-1.75zM21.0 0.0h1.75v1.75h-1.75zM0.0 1.8h1.75v1.75h-1.75zM1.8 1.8h1.75v1.75h-1.75zM10.5 1.8h1.75v1.75h-1.75zM12.2 1.8h1.75v1.75h-1.75zM21.0 1.8h1.75v1.75h-1.75zM5.2 3.5h1.75v1.75h-1.75zM8.8 3.5h1.75v1.75h-1.75zM15.8 3.5h1.75v1.75h-1.75zM8.8 5.2h1.75v1.75h-1.75zM10.5 5.2h1.75v1.75h-1.75zM14.0 5.2h1.75v1.75h-1.75zM15.8 5.2h1.75v1.75h-1.75zM19.2 5.2h1.75v1.75h-1.75zM1.8 7.0h1.75v1.75h-1.75zM5.2 7.0h1.75v1.75h-1.75zM8.8 7.0h1.75v1.75h-1.75zM12.2 7.0h1.75v1.75h-1.75zM14.0 7.0h1.75v1.75h-1.75zM17.5 7.0h1.75v1.75h-1.75zM0.0 8.8h1.75v1.75h-1.75zM1.8 8.8h1.75v1.75h-1.75zM3.5 8.8h1.75v1.75h-1.75zM8.8 8.8h1.75v1.75h-1.75zM10.5 8.8h1.75v1.75h-1.75zM12.2 8.8h1.75v1.75h-1.75zM15.8 8.8h1.75v1.75h-1.75zM3.5 10.5h1.75v1.75h-1.75zM5.2 10.5h1.75v1.75h-1.75zM17.5 10.5h1.75v1.75h-1.75zM19.2 10.5h1.75v1.75h-1.75zM0.0 12.2h1.75v1.75h-1.75zM5.2 12.2h1.75v1.75h-1.75zM7.0 12.2h1.75v1.75h-1.75zM8.8 12.2h1.75v1.75h-1.75zM10.5 12.2h1.75v1.75h-1.75zM15.8 12.2h1.75v1.75h-1.75zM17.5 12.2h1.75v1.75h-1.75zM0.0 14.0h1.75v1.75h-1.75zM1.8 14.0h1.75v1.75h-1.75zM3.5 14.0h1.75v1.75h-1.75zM5.2 14.0h1.75v1.75h-1.75zM8.8 14.0h1.75v1.75h-1.75zM10.5 14.0h1.75v1.75h-1.75zM14.0 14.0h1.75v1.75h-1.75zM17.5 14.0h1.75v1.75h-1.75zM5.2 15.8h1.75v1.75h-1.75zM8.8 15.8h1.75v1.75h-1.75zM12.2 15.8h1.75v1.75h-1.75zM19.2 15.8h1.75v1.75h-1.75zM21.0 15.8h1.75v1.75h-1.75zM0.0 17.5h1.75v1.75h-1.75zM1.8 17.5h1.75v1.75h-1.75zM3.5 17.5h1.75v1.75h-1.75zM7.0 17.5h1.75v1.75h-1.75zM8.8 17.5h1.75v1.75h-1.75zM3.5 19.2h1.75v1.75h-1.75zM5.2 19.2h1.75v1.75h-1.75zM12.2 19.2h1.75v1.75h-1.75zM3.5 21.0h1.75v1.75h-1.75zM8.8 21.0h1.75v1.75h-1.75zM15.8 21.0h1.75v1.75h-1.75zM19.2 21.0h1.75v1.75h-1.75z" fill="#2e2e32"/></svg><div class="tx" style="left:74px;top:7.7px;color:#c6c6ca;font-size:11.5px;letter-spacing:-0.2px">Ratbmenet</div><div class="pill" style="top:7.0px"><svg width="23" height="17" viewBox="0 0 23 17"><path d="M8 7l3.500 3.500L15 7" fill="none" stroke="#333" stroke-width="1.500"/></svg></div></div>
<div class="row" style="left:0px;top:185px;width:233px;height:33px;background:#2e2e32;border-top-color:#232326"><svg class="abs" style="left:13px;top:9px" width="13" height="12" viewBox="0 0 13 12"><rect x="1" y="1" width="11" height="10" fill="none" stroke="#d0d0d4" stroke-width="1.500"/><path d="M1 6h11" stroke="#d0d0d4" stroke-width="1.500"/></svg><div class="tx" style="left:45px;top:7.7px;color:#b4b4b9;font-size:10.5px;letter-spacing:-0.2px">派啟</div><div class="pill" style="top:7.0px"><svg width="23" height="17" viewBox="0 0 23 17"><rect x="7" y="4" width="9" height="9" fill="none" stroke="#333" stroke-width="1.400"/><path d="M7 8.500h9" stroke="#333" stroke-width="1.400"/></svg></div></div>
<div class="row" style="left:0px;top:218px;width:233px;height:30px;background:#2e2e32;border-top-color:#232326"><svg class="abs" style="left:12px;top:7.0px" width="15" height="14" viewBox="0 0 15 14"><path d="M3.500 1.500h8a2 2 0 0 1 2 2C13.500 8 10.500 11 7.500 12.800 4.500 11 1.500 8 1.500 3.500a2 2 0 0 1 2-2z" fill="none" stroke="#d6d6da" stroke-width="1.500"/></svg><div class="abs" style="left:37px;top:11px;width:2px;height:2px;background:#ccc"></div><div class="tx" style="left:45px;top:6.2px;color:#f4f4f6;font-size:11px;font-weight:bold;letter-spacing:-0.55px">DiComponents</div><svg class="abs" style="left:204px;top:7px" width="15" height="15" viewBox="0 0 15 15"><rect x="1" y="1" width="13" height="13" rx="5" fill="none" stroke="#77777c" stroke-width="1.200"/><path d="M7.500 8l2.500-3M7.500 8l1 2" stroke="#77777c" stroke-width="1.100" fill="none"/></svg></div>
<div class="row" style="left:0px;top:248px;width:223px;height:29px;background:#252528;border-top-color:#222225"><svg class="abs" style="left:14px;top:7px" width="13" height="11" viewBox="0 0 13 11"><path d="M3 1h9v7a2 2 0 0 1-2 2H3a2 2 0 0 1-2-2V3a2 2 0 0 1 2-2z" fill="none" stroke="#8d8d92" stroke-width="1.200"/></svg><div class="tx" style="left:45px;top:5.7px;color:#9c9ca1;font-size:11px;letter-spacing:-0.2px">클곡&nbsp; 隣囯</div><svg class="abs" style="left:206px;top:8px" width="8" height="10" viewBox="0 0 8 10"><path d="M2 1l4 4-4 4" fill="none" stroke="#9a9aa0" stroke-width="1.400"/></svg></div>
<div class="row" style="left:0px;top:277px;width:223px;height:35px;background:#2f2f33;border-top-color:#232326"><div class="lc"></div><svg class="abs" style="left:12px;top:10px" width="13" height="12" viewBox="0 0 13 12"><circle cx="7.500" cy="6" r="3.600" fill="none" stroke="#a0a0a5" stroke-width="1.200"/><path d="M1 3l3 1.500M1 9l3-1.500" stroke="#a0a0a5" stroke-width="1.200"/></svg><svg class="abs" style="left:45px;top:4px;background:#f1f1f1" width="22" height="24" viewBox="0 0 22 24"><path d="M4.0 0.0h2.0v2.0h-2.0zM8.0 0.0h2.0v2.0h-2.0zM14.0 0.0h2.0v2.0h-2.0zM20.0 0.0h2.0v2.0h-2.0zM6.0 2.0h2.0v2.0h-2.0zM8.0 2.0h2.0v2.0h-2.0zM10.0 2.0h2.0v2.0h-2.0zM0.0 4.0h2.0v2.0h-2.0zM2.0 4.0h2.0v2.0h-2.0zM10.0 4.0h2.0v2.0h-2.0zM12.0 4.0h2.0v2.0h-2.0zM14.0 4.0h2.0v2.0h-2.0zM16.0 4.0h2.0v2.0h-2.0zM20.0 4.0h2.0v2.0h-2.0zM2.0 6.0h2.0v2.0h-2.0zM8.0 6.0h2.0v2.0h-2.0zM14.0 6.0h2.0v2.0h-2.0zM18.0 6.0h2.0v2.0h-2.0zM0.0 8.0h2.0v2.0h-2.0zM2.0 8.0h2.0v2.0h-2.0zM4.0 8.0h2.0v2.0h-2.0zM8.0 8.0h2.0v2.0h-2.0zM10.0 8.0h2.0v2.0h-2.0zM22.0 8.0h2.0v2.0h-2.0zM2.0 10.0h2.0v2.0h-2.0zM8.0 10.0h2.0v2.0h-2.0zM14.0 10.0h2.0v2.0h-2.0zM16.0 10.0h2.0v2.0h-2.0zM22.0 10.0h2.0v2.0h-2.0zM4.0 12.0h2.0v2.0h-2.0zM8.0 12.0h2.0v2.0h-2.0zM18.0 12.0h2.0v2.0h-2.0zM20.0 12.0h2.0v2.0h-2.0zM10.0 14.0h2.0v2.0h-2.0zM14.0 14.0h2.0v2.0h-2.0zM18.0 14.0h2.0v2.0h-2.0zM22.0 14.0h2.0v2.0h-2.0zM0.0 16.0h2.0v2.0h-2.0zM4.0 16.0h2.0v2.0h-2.0zM8.0 16.0h2.0v2.0h-2.0zM18.0 16.0h2.0v2.0h-2.0zM0.0 18.0h2.0v2.0h-2.0zM14.0 18.0h2.0v2.0h-2.0zM18.0 18.0h2.0v2.0h-2.0zM20.0 18.0h2.0v2.0h-2.0zM0.0 20.0h2.0v2.0h-2.0zM8.0 20.0h2.0v2.0h-2.0zM10.0 20.0h2.0v2.0h-2.0zM12.0 20.0h2.0v2.0h-2.0zM20.0 20.0h2.0v2.0h-2.0zM22.0 20.0h2.0v2.0h-2.0zM2.0 22.0h2.0v2.0h-2.0zM4.0 22.0h2.0v2.0h-2.0zM10.0 22.0h2.0v2.0h-2.0zM22.0 22.0h2.0v2.0h-2.0zM8.0 24.0h2.0v2.0h-2.0zM10.0 24.0h2.0v2.0h-2.0zM14.0 24.0h2.0v2.0h-2.0zM18.0 24.0h2.0v2.0h-2.0zM22.0 24.0h2.0v2.0h-2.0z" fill="#2e2e32"/></svg><div class="tx" style="left:77px;top:8.7px;color:#ededf0;font-size:12px;letter-spacing:-0.2px">Decirer</div><div class="q" style="top:10.5px">?</div></div>
<div class="row" style="left:0px;top:312px;width:223px;height:35px;background:#2f2f33;border-top-color:#232326"><div class="lc"></div><svg class="abs" style="left:13px;top:10px" width="12" height="12" viewBox="0 0 12 12"><path d="M1.500 5L6 1.500 10.500 5v4.500a1 1 0 0 1-1 1h-7a1 1 0 0 1-1-1z" fill="none" stroke="#b4b4b9" stroke-width="1.200"/></svg><svg class="abs" style="left:45px;top:5px;background:#dcdcdc" width="23" height="24" viewBox="0 0 23 24"><g fill="#808080"><circle cx="1.0" cy="1.0" r="0.6"/><circle cx="3.0" cy="1.0" r="0.6"/><circle cx="5.0" cy="1.0" r="0.6"/><circle cx="7.0" cy="1.0" r="0.6"/><circle cx="9.0" cy="1.0" r="0.6"/><circle cx="11.0" cy="1.0" r="0.6"/><circle cx="13.0" cy="1.0" r="0.6"/><circle cx="15.0" cy="1.0" r="0.6"/><circle cx="17.0" cy="1.0" r="0.6"/><circle cx="19.0" cy="1.0" r="0.6"/><circle cx="21.0" cy="1.0" r="0.6"/><circle cx="2.0" cy="3.0" r="0.6"/><circle cx="4.0" cy="3.0" r="0.6"/><circle cx="6.0" cy="3.0" r="0.6"/><circle cx="8.0" cy="3.0" r="0.6"/><circle cx="10.0" cy="3.0" r="0.6"/><circle cx="12.0" cy="3.0" r="0.6"/><circle cx="14.0" cy="3.0" r="0.6"/><circle cx="16.0" cy="3.0" r="0.6"/><circle cx="18.0" cy="3.0" r="0.6"/><circle cx="20.0" cy="3.0" r="0.6"/><circle cx="22.0" cy="3.0" r="0.6"/><circle cx="1.0" cy="5.0" r="0.6"/><circle cx="3.0" cy="5.0" r="0.6"/><circle cx="5.0" cy="5.0" r="0.6"/><circle cx="7.0" cy="5.0" r="0.6"/><circle cx="9.0" cy="5.0" r="0.6"/><circle cx="11.0" cy="5.0" r="0.6"/><circle cx="13.0" cy="5.0" r="0.6"/><circle cx="15.0" cy="5.0" r="0.6"/><circle cx="17.0" cy="5.0" r="0.6"/><circle cx="19.0" cy="5.0" r="0.6"/><circle cx="21.0" cy="5.0" r="0.6"/><circle cx="2.0" cy="7.0" r="0.6"/><circle cx="4.0" cy="7.0" r="0.6"/><circle cx="6.0" cy="7.0" r="0.6"/><circle cx="8.0" cy="7.0" r="0.6"/><circle cx="10.0" cy="7.0" r="0.6"/><circle cx="12.0" cy="7.0" r="0.6"/><circle cx="14.0" cy="7.0" r="0.6"/><circle cx="16.0" cy="7.0" r="0.6"/><circle cx="18.0" cy="7.0" r="0.6"/><circle cx="20.0" cy="7.0" r="0.6"/><circle cx="22.0" cy="7.0" r="0.6"/><circle cx="1.0" cy="9.0" r="0.6"/><circle cx="3.0" cy="9.0" r="0.6"/><circle cx="5.0" cy="9.0" r="0.6"/><circle cx="7.0" cy="9.0" r="0.6"/><circle cx="9.0" cy="9.0" r="0.6"/><circle cx="11.0" cy="9.0" r="0.6"/><circle cx="13.0" cy="9.0" r="0.6"/><circle cx="15.0" cy="9.0" r="0.6"/><circle cx="17.0" cy="9.0" r="0.6"/><circle cx="19.0" cy="9.0" r="0.6"/><circle cx="21.0" cy="9.0" r="0.6"/><circle cx="2.0" cy="11.0" r="0.6"/><circle cx="4.0" cy="11.0" r="0.6"/><circle cx="6.0" cy="11.0" r="0.6"/><circle cx="8.0" cy="11.0" r="0.6"/><circle cx="10.0" cy="11.0" r="0.6"/><circle cx="12.0" cy="11.0" r="0.6"/><circle cx="14.0" cy="11.0" r="0.6"/><circle cx="16.0" cy="11.0" r="0.6"/><circle cx="18.0" cy="11.0" r="0.6"/><circle cx="20.0" cy="11.0" r="0.6"/><circle cx="22.0" cy="11.0" r="0.6"/><circle cx="1.0" cy="13.0" r="0.6"/><circle cx="3.0" cy="13.0" r="0.6"/><circle cx="5.0" cy="13.0" r="0.6"/><circle cx="7.0" cy="13.0" r="0.6"/><circle cx="9.0" cy="13.0" r="0.6"/><circle cx="11.0" cy="13.0" r="0.6"/><circle cx="13.0" cy="13.0" r="0.6"/><circle cx="15.0" cy="13.0" r="0.6"/><circle cx="17.0" cy="13.0" r="0.6"/><circle cx="19.0" cy="13.0" r="0.6"/><circle cx="21.0" cy="13.0" r="0.6"/><circle cx="2.0" cy="15.0" r="0.6"/><circle cx="4.0" cy="15.0" r="0.6"/><circle cx="6.0" cy="15.0" r="0.6"/><circle cx="8.0" cy="15.0" r="0.6"/><circle cx="10.0" cy="15.0" r="0.6"/><circle cx="12.0" cy="15.0" r="0.6"/><circle cx="14.0" cy="15.0" r="0.6"/><circle cx="16.0" cy="15.0" r="0.6"/><circle cx="18.0" cy="15.0" r="0.6"/><circle cx="20.0" cy="15.0" r="0.6"/><circle cx="22.0" cy="15.0" r="0.6"/><circle cx="1.0" cy="17.0" r="0.6"/><circle cx="3.0" cy="17.0" r="0.6"/><circle cx="5.0" cy="17.0" r="0.6"/><circle cx="7.0" cy="17.0" r="0.6"/><circle cx="9.0" cy="17.0" r="0.6"/><circle cx="11.0" cy="17.0" r="0.6"/><circle cx="13.0" cy="17.0" r="0.6"/><circle cx="15.0" cy="17.0" r="0.6"/><circle cx="17.0" cy="17.0" r="0.6"/><circle cx="19.0" cy="17.0" r="0.6"/><circle cx="21.0" cy="17.0" r="0.6"/><circle cx="2.0" cy="19.0" r="0.6"/><circle cx="4.0" cy="19.0" r="0.6"/><circle cx="6.0" cy="19.0" r="0.6"/><circle cx="8.0" cy="19.0" r="0.6"/><circle cx="10.0" cy="19.0" r="0.6"/><circle cx="12.0" cy="19.0" r="0.6"/><circle cx="14.0" cy="19.0" r="0.6"/><circle cx="16.0" cy="19.0" r="0.6"/><circle cx="18.0" cy="19.0" r="0.6"/><circle cx="20.0" cy="19.0" r="0.6"/><circle cx="22.0" cy="19.0" r="0.6"/><circle cx="1.0" cy="21.0" r="0.6"/><circle cx="3.0" cy="21.0" r="0.6"/><circle cx="5.0" cy="21.0" r="0.6"/><circle cx="7.0" cy="21.0" r="0.6"/><circle cx="9.0" cy="21.0" r="0.6"/><circle cx="11.0" cy="21.0" r="0.6"/><circle cx="13.0" cy="21.0" r="0.6"/><circle cx="15.0" cy="21.0" r="0.6"/><circle cx="17.0" cy="21.0" r="0.6"/><circle cx="19.0" cy="21.0" r="0.6"/><circle cx="21.0" cy="21.0" r="0.6"/><circle cx="2.0" cy="23.0" r="0.6"/><circle cx="4.0" cy="23.0" r="0.6"/><circle cx="6.0" cy="23.0" r="0.6"/><circle cx="8.0" cy="23.0" r="0.6"/><circle cx="10.0" cy="23.0" r="0.6"/><circle cx="12.0" cy="23.0" r="0.6"/><circle cx="14.0" cy="23.0" r="0.6"/><circle cx="16.0" cy="23.0" r="0.6"/><circle cx="18.0" cy="23.0" r="0.6"/><circle cx="20.0" cy="23.0" r="0.6"/><circle cx="22.0" cy="23.0" r="0.6"/></g></svg><div class="tx" style="left:77px;top:8.7px;color:#f2f2f4;font-size:12px;letter-spacing:-0.2px">Vitrentiars</div><div class="q" style="top:10.5px">?</div></div>
<div class="row" style="left:0px;top:347px;width:223px;height:23px;background:#4270ac;border-top-color:#3b67a0"><svg class="abs" style="left:15px;top:5px" width="12" height="11" viewBox="0 0 12 11"><path d="M1 10V5l3-2v7M4 10h7V1L7 4v6" fill="none" stroke="#dfe8f5" stroke-width="1.200"/></svg><div class="ar" style="left:33px;top:6.5px;border-left-color:#eef3fa"></div><div class="tx" style="left:45px;top:2.7px;color:#e3ebf7;font-size:11px;letter-spacing:-0.2px">開量 ~ ﾉ〇|ｰ)</div></div>
<div class="row" style="left:0px;top:370px;width:223px;height:35px;background:#4472af;border-top-color:#3f6ba6"><div class="lc" style="background:#2b303b"></div><svg class="abs" style="left:12px;top:11px" width="12" height="11" viewBox="0 0 12 11"><ellipse cx="6" cy="5.500" rx="4" ry="3.800" fill="none" stroke="#c8cfdb" stroke-width="1.200"/></svg><div class="abs" style="left:44px;top:-1px;width:29px;height:32px;background:#6a6d77;border:2px solid #f4f4f6"></div><div class="tx" style="left:77px;top:8.7px;color:#eaf0fa;font-size:12px;letter-spacing:-0.2px">Ceneoe</div></div>
<div class="row" style="left:0px;top:405px;width:223px;height:35px;background:#2f2f33;border-top-color:#232326"><div class="lc"></div><svg class="abs" style="left:13px;top:11px" width="11" height="11" viewBox="0 0 11 11"><rect x="1" y="1" width="9" height="9" rx="1" fill="none" stroke="#88888d" stroke-width="1.200"/></svg><svg class="abs" style="left:45px;top:4px;background:#efefef" width="22" height="23" viewBox="0 0 22 23"><g fill="#aaa"><circle cx="1.3" cy="1.3" r="0.5"/><circle cx="3.9" cy="1.3" r="0.5"/><circle cx="6.5" cy="1.3" r="0.5"/><circle cx="9.1" cy="1.3" r="0.5"/><circle cx="11.7" cy="1.3" r="0.5"/><circle cx="14.3" cy="1.3" r="0.5"/><circle cx="16.9" cy="1.3" r="0.5"/><circle cx="19.5" cy="1.3" r="0.5"/><circle cx="2.6" cy="3.9" r="0.5"/><circle cx="5.2" cy="3.9" r="0.5"/><circle cx="7.8" cy="3.9" r="0.5"/><circle cx="10.4" cy="3.9" r="0.5"/><circle cx="13.0" cy="3.9" r="0.5"/><circle cx="15.6" cy="3.9" r="0.5"/><circle cx="18.2" cy="3.9" r="0.5"/><circle cx="20.8" cy="3.9" r="0.5"/><circle cx="1.3" cy="6.5" r="0.5"/><circle cx="3.9" cy="6.5" r="0.5"/><circle cx="6.5" cy="6.5" r="0.5"/><circle cx="9.1" cy="6.5" r="0.5"/><circle cx="11.7" cy="6.5" r="0.5"/><circle cx="14.3" cy="6.5" r="0.5"/><circle cx="16.9" cy="6.5" r="0.5"/><circle cx="19.5" cy="6.5" r="0.5"/><circle cx="2.6" cy="9.1" r="0.5"/><circle cx="5.2" cy="9.1" r="0.5"/><circle cx="7.8" cy="9.1" r="0.5"/><circle cx="10.4" cy="9.1" r="0.5"/><circle cx="13.0" cy="9.1" r="0.5"/><circle cx="15.6" cy="9.1" r="0.5"/><circle cx="18.2" cy="9.1" r="0.5"/><circle cx="20.8" cy="9.1" r="0.5"/><circle cx="1.3" cy="11.7" r="0.5"/><circle cx="3.9" cy="11.7" r="0.5"/><circle cx="6.5" cy="11.7" r="0.5"/><circle cx="9.1" cy="11.7" r="0.5"/><circle cx="11.7" cy="11.7" r="0.5"/><circle cx="14.3" cy="11.7" r="0.5"/><circle cx="16.9" cy="11.7" r="0.5"/><circle cx="19.5" cy="11.7" r="0.5"/><circle cx="2.6" cy="14.3" r="0.5"/><circle cx="5.2" cy="14.3" r="0.5"/><circle cx="7.8" cy="14.3" r="0.5"/><circle cx="10.4" cy="14.3" r="0.5"/><circle cx="13.0" cy="14.3" r="0.5"/><circle cx="15.6" cy="14.3" r="0.5"/><circle cx="18.2" cy="14.3" r="0.5"/><circle cx="20.8" cy="14.3" r="0.5"/><circle cx="1.3" cy="16.9" r="0.5"/><circle cx="3.9" cy="16.9" r="0.5"/><circle cx="6.5" cy="16.9" r="0.5"/><circle cx="9.1" cy="16.9" r="0.5"/><circle cx="11.7" cy="16.9" r="0.5"/><circle cx="14.3" cy="16.9" r="0.5"/><circle cx="16.9" cy="16.9" r="0.5"/><circle cx="19.5" cy="16.9" r="0.5"/><circle cx="2.6" cy="19.5" r="0.5"/><circle cx="5.2" cy="19.5" r="0.5"/><circle cx="7.8" cy="19.5" r="0.5"/><circle cx="10.4" cy="19.5" r="0.5"/><circle cx="13.0" cy="19.5" r="0.5"/><circle cx="15.6" cy="19.5" r="0.5"/><circle cx="18.2" cy="19.5" r="0.5"/><circle cx="20.8" cy="19.5" r="0.5"/><circle cx="1.3" cy="22.1" r="0.5"/><circle cx="3.9" cy="22.1" r="0.5"/><circle cx="6.5" cy="22.1" r="0.5"/><circle cx="9.1" cy="22.1" r="0.5"/><circle cx="11.7" cy="22.1" r="0.5"/><circle cx="14.3" cy="22.1" r="0.5"/><circle cx="16.9" cy="22.1" r="0.5"/><circle cx="19.5" cy="22.1" r="0.5"/></g></svg><div class="tx" style="left:74.5px;top:8.7px;color:#dcdce0;font-size:11px;letter-spacing:-0.2px">Dooly</div><div class="q" style="top:10.5px">?</div></div>
<div class="row" style="left:0px;top:440px;width:223px;height:36px;background:#2f2f33;border-top-color:#232326"><div class="lc"></div><div class="ar" style="left:31.5px;top:13.0px;border-left-color:#5d5d62"></div><svg class="abs" style="left:45px;top:5px;background:#f6f6f6" width="21" height="22" viewBox="0 0 21 22"><g fill="#999"><circle cx="1.6" cy="1.6" r="0.6"/><circle cx="4.8" cy="1.6" r="0.6"/><circle cx="8.0" cy="1.6" r="0.6"/><circle cx="11.2" cy="1.6" r="0.6"/><circle cx="14.4" cy="1.6" r="0.6"/><circle cx="17.6" cy="1.6" r="0.6"/><circle cx="20.8" cy="1.6" r="0.6"/><circle cx="3.2" cy="4.8" r="0.6"/><circle cx="6.4" cy="4.8" r="0.6"/><circle cx="9.6" cy="4.8" r="0.6"/><circle cx="12.8" cy="4.8" r="0.6"/><circle cx="16.0" cy="4.8" r="0.6"/><circle cx="19.2" cy="4.8" r="0.6"/><circle cx="1.6" cy="8.0" r="0.6"/><circle cx="4.8" cy="8.0" r="0.6"/><circle cx="8.0" cy="8.0" r="0.6"/><circle cx="11.2" cy="8.0" r="0.6"/><circle cx="14.4" cy="8.0" r="0.6"/><circle cx="17.6" cy="8.0" r="0.6"/><circle cx="20.8" cy="8.0" r="0.6"/><circle cx="3.2" cy="11.2" r="0.6"/><circle cx="6.4" cy="11.2" r="0.6"/><circle cx="9.6" cy="11.2" r="0.6"/><circle cx="12.8" cy="11.2" r="0.6"/><circle cx="16.0" cy="11.2" r="0.6"/><circle cx="19.2" cy="11.2" r="0.6"/><circle cx="1.6" cy="14.4" r="0.6"/><circle cx="4.8" cy="14.4" r="0.6"/><circle cx="8.0" cy="14.4" r="0.6"/><circle cx="11.2" cy="14.4" r="0.6"/><circle cx="14.4" cy="14.4" r="0.6"/><circle cx="17.6" cy="14.4" r="0.6"/><circle cx="20.8" cy="14.4" r="0.6"/><circle cx="3.2" cy="17.6" r="0.6"/><circle cx="6.4" cy="17.6" r="0.6"/><circle cx="9.6" cy="17.6" r="0.6"/><circle cx="12.8" cy="17.6" r="0.6"/><circle cx="16.0" cy="17.6" r="0.6"/><circle cx="19.2" cy="17.6" r="0.6"/><circle cx="1.6" cy="20.8" r="0.6"/><circle cx="4.8" cy="20.8" r="0.6"/><circle cx="8.0" cy="20.8" r="0.6"/><circle cx="11.2" cy="20.8" r="0.6"/><circle cx="14.4" cy="20.8" r="0.6"/><circle cx="17.6" cy="20.8" r="0.6"/><circle cx="20.8" cy="20.8" r="0.6"/></g></svg><div class="tx" style="left:74.5px;top:9.2px;color:#dcdce0;font-size:11px;letter-spacing:-0.2px">Dhel</div><div class="q" style="top:11.0px">?</div></div>
<div class="row" style="left:0px;top:476px;width:223px;height:37px;background:#2f2f33;border-top-color:#232326"><div class="lc"></div><svg class="abs" style="left:45px;top:6px" width="22" height="23" viewBox="0 0 22 23"><rect width="22" height="23" fill="#8c8c8e"/><path d="M-2 20L12 -2M3 26L18 2M10 27L24 4M-4 10L6 -3" stroke="#c9c9cb" stroke-width="2.200" fill="none"/><path d="M0 26L16 0M7 26L22 6" stroke="#6e6e70" stroke-width="1.200" fill="none"/></svg><div class="tx" style="left:74.5px;top:9.7px;color:#dcdce0;font-size:11px;letter-spacing:-0.2px">Cofabioles</div><div class="q" style="top:11.5px">?</div></div>
<div class="row" style="left:0px;top:513px;width:223px;height:35px;background:#2f2f33;border-top-color:#232326"><div class="lc"></div><div class="ar" style="left:31.5px;top:12.5px;border-left-color:#5d5d62"></div><div class="th" style="left:46px;top:6px;width:18px;height:20px;background:#fbfbfb"></div><div class="tx" style="left:74.5px;top:8.7px;color:#d0d0d4;font-size:11px;letter-spacing:-0.2px">Ccoy</div><div class="q" style="top:10.5px">?</div></div>
<div class="row" style="left:0px;top:548px;width:223px;height:33px;background:#2f2f33;border-top-color:#232326"><div class="lc"></div><div class="ar" style="left:31.5px;top:11.5px;border-left-color:#5d5d62"></div><svg class="abs" style="left:46px;top:5px;background:#f4f4f4" width="18" height="19" viewBox="0 0 18 19"><g fill="#bbb"><circle cx="1.3" cy="1.3" r="0.4"/><circle cx="3.9" cy="1.3" r="0.4"/><circle cx="6.5" cy="1.3" r="0.4"/><circle cx="9.1" cy="1.3" r="0.4"/><circle cx="11.7" cy="1.3" r="0.4"/><circle cx="14.3" cy="1.3" r="0.4"/><circle cx="16.9" cy="1.3" r="0.4"/><circle cx="2.6" cy="3.9" r="0.4"/><circle cx="5.2" cy="3.9" r="0.4"/><circle cx="7.8" cy="3.9" r="0.4"/><circle cx="10.4" cy="3.9" r="0.4"/><circle cx="13.0" cy="3.9" r="0.4"/><circle cx="15.6" cy="3.9" r="0.4"/><circle cx="1.3" cy="6.5" r="0.4"/><circle cx="3.9" cy="6.5" r="0.4"/><circle cx="6.5" cy="6.5" r="0.4"/><circle cx="9.1" cy="6.5" r="0.4"/><circle cx="11.7" cy="6.5" r="0.4"/><circle cx="14.3" cy="6.5" r="0.4"/><circle cx="16.9" cy="6.5" r="0.4"/><circle cx="2.6" cy="9.1" r="0.4"/><circle cx="5.2" cy="9.1" r="0.4"/><circle cx="7.8" cy="9.1" r="0.4"/><circle cx="10.4" cy="9.1" r="0.4"/><circle cx="13.0" cy="9.1" r="0.4"/><circle cx="15.6" cy="9.1" r="0.4"/><circle cx="1.3" cy="11.7" r="0.4"/><circle cx="3.9" cy="11.7" r="0.4"/><circle cx="6.5" cy="11.7" r="0.4"/><circle cx="9.1" cy="11.7" r="0.4"/><circle cx="11.7" cy="11.7" r="0.4"/><circle cx="14.3" cy="11.7" r="0.4"/><circle cx="16.9" cy="11.7" r="0.4"/><circle cx="2.6" cy="14.3" r="0.4"/><circle cx="5.2" cy="14.3" r="0.4"/><circle cx="7.8" cy="14.3" r="0.4"/><circle cx="10.4" cy="14.3" r="0.4"/><circle cx="13.0" cy="14.3" r="0.4"/><circle cx="15.6" cy="14.3" r="0.4"/><circle cx="1.3" cy="16.9" r="0.4"/><circle cx="3.9" cy="16.9" r="0.4"/><circle cx="6.5" cy="16.9" r="0.4"/><circle cx="9.1" cy="16.9" r="0.4"/><circle cx="11.7" cy="16.9" r="0.4"/><circle cx="14.3" cy="16.9" r="0.4"/><circle cx="16.9" cy="16.9" r="0.4"/></g></svg><div class="tx" style="left:74.5px;top:7.7px;color:#d0d0d4;font-size:11px;letter-spacing:-0.2px">Dosprens</div><div class="q" style="top:9.5px">?</div></div>
<div class="row" style="left:0px;top:581px;width:223px;height:31px;background:#2f2f33;border-top-color:#232326"><div class="lc"></div><div class="ar" style="left:31.5px;top:10.5px;border-left-color:#5d5d62"></div><div class="th" style="left:46px;top:4px;width:18px;height:19px;background:#fbfbfb"></div><div class="tx" style="left:74.5px;top:6.7px;color:#d8d8dc;font-size:11px;letter-spacing:-0.2px">Rates</div><div class="q" style="top:8.5px">?</div></div>
<div class="row" style="left:0px;top:612px;width:223px;height:32px;background:#2f2f33;border-top-color:#232326"><div class="lc"></div><div class="ar" style="left:31.5px;top:11.0px;border-left-color:#5d5d62"></div><svg class="abs" style="left:46px;top:4px;background:#f4f4f4" width="18" height="19" viewBox="0 0 18 19"><g fill="none" stroke="#555" stroke-width="0.900"><circle cx="5" cy="6" r="2.500"/><circle cx="12" cy="5" r="2.500"/><circle cx="8" cy="12" r="2.500"/><circle cx="15" cy="13" r="2.500"/><circle cx="2" cy="15" r="2"/></g><path d="M0 9h18M9 0v4" stroke="#666" stroke-width="0.800"/></svg><div class="tx" style="left:74.5px;top:7.2px;color:#d8d8dc;font-size:11px;letter-spacing:-0.2px">Saaoy</div><div class="q" style="top:9.0px">?</div></div>
<div class="row" style="left:0px;top:644px;width:223px;height:31px;background:#2f2f33;border-top-color:#232326"><div class="lc"></div><div class="ar" style="left:31.5px;top:10.5px;border-left-color:#5d5d62"></div><div class="th" style="left:46px;top:4px;width:18px;height:19px;background:#fbfbfb"></div><div class="tx" style="left:74.5px;top:6.7px;color:#d8d8dc;font-size:11px;letter-spacing:-0.2px">Dioteid</div><div class="q" style="top:8.5px">?</div></div>
<div class="row" style="left:0px;top:675px;width:223px;height:31px;background:#2f2f33;border-top-color:#232326"><div class="lc"></div><div class="ar" style="left:31.5px;top:10.5px;border-left-color:#5d5d62"></div><svg class="abs" style="left:46px;top:5px" width="18" height="19" viewBox="0 0 18 19"><rect width="18" height="19" fill="#17171a"/><path d="M2 2l4 1-2 5zM7 6c3-3 7-2 8 1-3-1-5 1-5 5l-3 3c-2-3-2-6 0-9zM13 12l3 1-1 4-3-1zM2 12l2 5" fill="#e9e9eb" stroke="#e9e9eb" stroke-width="0.600"/></svg><div class="tx" style="left:74.5px;top:6.7px;color:#e4e4e8;font-size:11px;letter-spacing:-0.2px">Spoery</div><div class="q" style="top:8.5px">?</div></div>
<div class="abs" style="left:223px;top:248px;width:10px;height:332px;background:#242427"></div><div class="abs" style="left:223px;top:580px;width:10px;height:126px;background:#2d2d31"></div><div class="abs" style="left:226px;top:582px;width:4px;height:3px;border-radius:2px;background:#3d3d42"></div>
<div class="abs" style="left:225px;top:252px;width:6px;height:265px;border-radius:3px;background:#56565b"></div>
<div class="abs" style="left:0;top:706px;width:233px;height:29px;background:#2a2a2e;border-top:2px solid #232326"></div>
<svg class="abs" style="left:39px;top:709px" width="20" height="22" viewBox="0 0 20 22"><path d="M3 3h12a3 3 0 0 1 3 3v6a3 3 0 0 1-3 3H7l-4 4z" fill="none" stroke="#3d78c4" stroke-width="1.800"/><path d="M8 7h6v4H9" fill="none" stroke="#3d78c4" stroke-width="1.400"/></svg>
<svg class="abs" style="left:80px;top:711px" width="16" height="18" viewBox="0 0 16 18"><path d="M2 16V7l7-5 5 3-4 5v6z" fill="none" stroke="#b7b7bc" stroke-width="1.300"/><path d="M6 10l3-3" stroke="#b7b7bc" stroke-width="1.200"/></svg>
<svg class="abs" style="left:121px;top:711px" width="14" height="14" viewBox="0 0 14 14"><rect x="1.500" y="1.500" width="11" height="11" rx="2.500" fill="none" stroke="#9d9da2" stroke-width="1.300"/></svg>
<div class="abs" style="left:121px;top:730px;width:14px;height:3px;background:#77777c"></div>
<svg class="abs" style="left:160px;top:710px" width="14" height="14" viewBox="0 0 14 14"><circle cx="7" cy="7" r="5" fill="none" stroke="#9d9da2" stroke-width="1.300"/></svg>
<div class="abs" style="left:159px;top:727px;font-size:5.500px;line-height:8px;color:#8a8a90">Ktne</div>
<svg class="abs" style="left:200px;top:710px" width="14" height="14" viewBox="0 0 14 14"><circle cx="7" cy="7" r="5.500" fill="#d2d2d6"/><path d="M4 7h6M7 7v4" stroke="#2a2a2e" stroke-width="1.500"/></svg>
<div class="abs" style="left:196px;top:727px;font-size:5.500px;line-height:8px;color:#8a8a90">Wottbo</div>
</div>
</body>
</html>
